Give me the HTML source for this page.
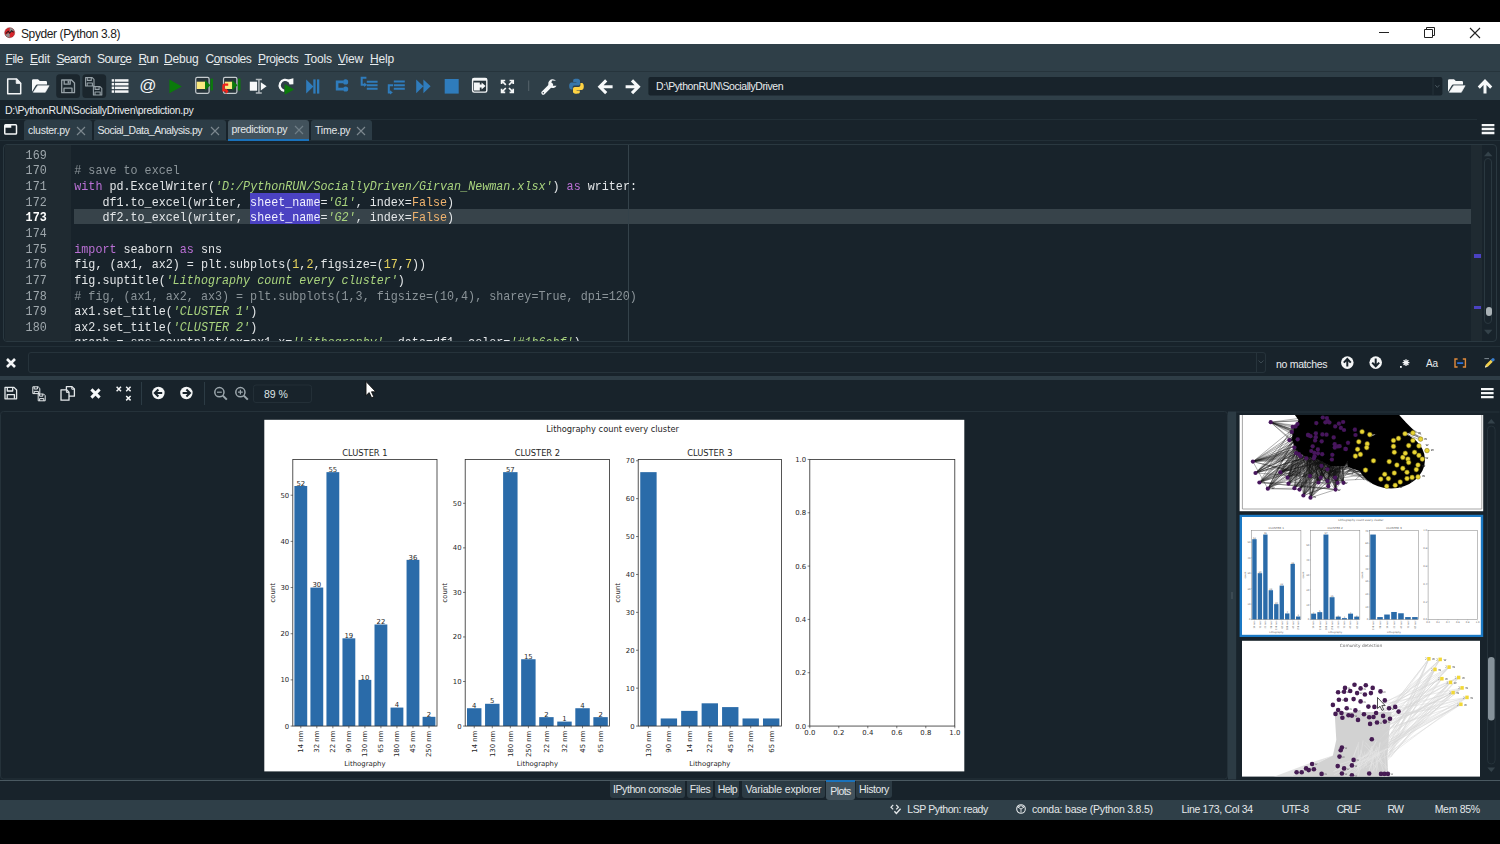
<!DOCTYPE html>
<html lang="en">
<head>
<meta charset="utf-8">
<title>Spyder (Python 3.8)</title>
<style>
*{box-sizing:border-box;margin:0;padding:0}
html,body{width:1500px;height:844px;overflow:hidden;background:#000}
body{position:relative;font-family:"Liberation Sans",sans-serif;font-size:11px;color:#e6e9eb}
.abs{position:absolute}
#titlebar{left:0;top:22px;width:1500px;height:22px;background:#fff;color:#1a1a1a}
#titlebar .ttl{position:absolute;left:21px;top:4.600px;font-size:12px;line-height:15px;letter-spacing:-.4px}
#menubar{left:0;top:44px;width:1500px;height:27px;background:#2f3f48}
#menubar span{position:absolute;top:7.700px;font-size:12px;line-height:15px;color:#e8ecee;white-space:nowrap}
#menubar u{text-decoration-thickness:1px;text-underline-offset:1px}
#toolbar{left:0;top:71px;width:1500px;height:29px;background:#2f3f48;overflow:hidden}
#pathrow{left:0;top:100px;width:1500px;height:19px;background:#18232b}
#pathrow span{position:absolute;left:5px;top:3px;font-size:10.500px;line-height:14px;color:#e8ecee;letter-spacing:-.3px;white-space:nowrap}
#tabrow{left:0;top:119px;width:1500px;height:22px;background:#18232b}
.tab{position:absolute;top:0;height:21px;background:#2c3c46;border-radius:3px 3px 0 0;font-size:10.5px;line-height:21px;color:#e4e8ea;white-space:nowrap;padding-left:4px;letter-spacing:-0.1px}
.tab.sel{background:#42525c;border-bottom:2px solid #1a72bb;line-height:19px}
.tab .x{position:absolute;right:5px;top:0;color:#8b979e;font-size:12px}
#editor{left:0;top:141px;width:1500px;height:204px;background:#18232b}
#findbar{left:0;top:345px;width:1500px;height:35px;background:#18232b}
#plotbar{left:0;top:380px;width:1500px;height:28px;background:#18232b}
#plots{left:0;top:408px;width:1500px;height:372px;background:#18232b}
#btabs{left:0;top:780px;width:1500px;height:20px;background:#18232b}
#status{left:0;top:799.700px;width:1500px;height:20.300px;background:#2f3f48}
</style>
</head>
<body>
<!-- ===== title bar ===== -->
<div id="titlebar" class="abs">
<svg class="abs" style="left:4.200px;top:5.200px" width="11.400" height="11.400" viewBox="0 0 14 14">
<circle cx="7" cy="7" r="6.2" fill="#d8262c"/>
<path d="M7 .8 A6.2 6.2 0 0 1 12.6 4.4 L7 7Z" fill="#8e8e8e"/>
<path d="M1.4 9.6 A6.2 6.2 0 0 0 7 13.2 L7 7Z" fill="#8e8e8e"/>
<path d="M2.2 8.2 L5.2 5.2 L7 7.6 L9.4 4.6 L11.8 6.6" fill="none" stroke="#2a1a1a" stroke-width="1.3"/>
<circle cx="7" cy="7" r="6.2" fill="none" stroke="#7a2226" stroke-width=".5"/>
</svg>
<span class="ttl">Spyder (Python 3.8)</span>
<svg class="abs" style="left:1370px;top:0" width="130" height="22" viewBox="0 0 130 22">
<path d="M9 10.5H19" stroke="#222" stroke-width="1"/>
<path d="M54.5 7.5H62.500V15.500H54.500Z M56.5 7.5V5.5H64.500V13.500H62.500" fill="none" stroke="#222" stroke-width="1"/>
<path d="M100 6L110 16M110 6L100 16" stroke="#222" stroke-width="1.1"/>
</svg>
</div>

<!-- ===== menu bar ===== -->
<div id="menubar" class="abs">
<span style="left:5.500px;letter-spacing:-.45px"><u>F</u>ile</span>
<span style="left:30px;letter-spacing:-.2px"><u>E</u>dit</span>
<span style="left:56.500px;letter-spacing:-.7px"><u>S</u>earch</span>
<span style="left:97px;letter-spacing:-.62px">Sour<u>c</u>e</span>
<span style="left:138.500px;letter-spacing:-.9px"><u>R</u>un</span>
<span style="left:164px;letter-spacing:-.2px"><u>D</u>ebug</span>
<span style="left:205.500px;letter-spacing:-.55px">C<u>o</u>nsoles</span>
<span style="left:258px;letter-spacing:-.38px"><u>P</u>rojects</span>
<span style="left:304.500px;letter-spacing:-.1px"><u>T</u>ools</span>
<span style="left:338px;letter-spacing:-.2px"><u>V</u>iew</span>
<span style="left:370px;letter-spacing:-.15px"><u>H</u>elp</span>
</div>
<!-- ===== main toolbar ===== -->
<div id="toolbar" class="abs">
<svg class="abs" style="left:0;top:0" width="1500" height="30" viewBox="0 71 1500 30">
<rect x="0" y="71" width="1500" height="1" fill="#26343c"/>
<!-- new file -->
<path d="M7.700 78.900H16.400L20.700 83.200V93.800H7.700Z" fill="none" stroke="#f4f6f7" stroke-width="1.500" stroke-linejoin="round"/>
<path d="M16.200 78.900V83.400H20.700Z" fill="#f4f6f7" stroke="#f4f6f7" stroke-width=".8" stroke-linejoin="round"/>
<!-- open folder -->
<path d="M32 80.600Q32 79.200 33.400 79.200H38L39.800 81H45.800Q47 81 47 82.200V84.600H37.200Q36.200 84.600 35.700 85.500L32 91.800Z" fill="#f7f9fa"/>
<path d="M37.600 85.700H49.100L45.300 92.300H33.300Z" fill="#f7f9fa" stroke="#f7f9fa" stroke-width=".6" stroke-linejoin="round"/>
<!-- save (disabled, pressed-look) -->
<rect x="56.200" y="74.200" width="23.800" height="23.800" rx="3.500" fill="#1b262d"/>
<g fill="none" stroke="#96a1a7" stroke-width="1.300" stroke-linejoin="round">
<path d="M61.700 80H71.500L74.500 83V92.700H61.700Z"/>
<path d="M64.200 80V84.200H70.200V80"/>
<path d="M64 92.700V88.200H72V92.700"/>
</g>
<rect x="67.600" y="80.600" width="1.600" height="3" fill="#96a1a7"/>
<!-- save all -->
<rect x="82.400" y="74.200" width="23.800" height="23.800" rx="3.500" fill="#1b262d"/>
<g fill="none" stroke="#96a1a7" stroke-width="1.100" stroke-linejoin="round">
<path d="M85.600 77.600H92.200L94 79.400V86H85.600Z"/>
<path d="M87.300 77.600V80.400H91.300V77.600"/>
<path d="M87.200 86V83H92.400V86"/>
<path d="M93.400 86.600H100L101.800 88.400V95H93.400Z" fill="#1b262d"/>
<path d="M95.100 86.600V89.400H99.100V86.600"/>
<path d="M95 95V92H100.200V95"/>
</g>
<!-- list -->
<g fill="#f4f6f7">
<rect x="111.700" y="79.200" width="16.800" height="2.500"/>
<rect x="111.700" y="82.900" width="16.800" height="2.500"/>
<rect x="111.700" y="86.600" width="16.800" height="2.500"/>
<rect x="111.700" y="90.300" width="16.800" height="2.500"/>
</g>
<rect x="114.200" y="79" width=".8" height="14" fill="#2f3f48"/>
<!-- run -->
<path d="M169.400 79.600L181.800 86.400L169.400 93.200Z" fill="#0b7a0b"/>
<!-- run cell -->
<rect x="195.700" y="77.400" width="13.400" height="15.900" rx="1.500" fill="#27343b" stroke="#c6cccf" stroke-width="1.200"/>
<rect x="196.700" y="81.700" width="8.500" height="7.300" fill="#fbe97e"/>
<path d="M205 80L210.300 85.200L205 90.400Z" fill="#0b7a0b"/>
<rect x="210.500" y="78.600" width="2.400" height="11.800" fill="#0b7a0b"/>
<!-- run cell and advance -->
<rect x="223.500" y="77.400" width="13.400" height="15.900" rx="1.500" fill="#27343b" stroke="#c6cccf" stroke-width="1.200"/>
<rect x="224.800" y="81.700" width="7.600" height="7.300" fill="#fbe97e"/>
<path d="M232.200 80L237.500 85.200L232.200 90.400Z" fill="#0b7a0b"/>
<rect x="238" y="78.600" width="2.500" height="11.800" fill="#0b7a0b"/>
<path d="M228.200 84.600H224.600Q223.400 84.600 223.400 85.800V90.400H226.800" fill="none" stroke="#f3221a" stroke-width="2.200"/>
<path d="M225.600 88.200L228.600 91.200L225.600 94.200Z" fill="#f3221a"/>
<!-- run selection -->
<rect x="249.800" y="81.700" width="7.300" height="9" fill="#f7f9fa"/>
<path d="M255.800 79.600H261.800M255.800 93H261.800M258.900 79.600V93" stroke="#b4bbbf" stroke-width="1.500" fill="none"/>
<path d="M260.800 82.200L266.600 86.300L260.800 90.400Z" fill="#f7f9fa"/>
<!-- re-run -->
<path d="M289 81.400A5.500 5.500 0 1 0 284.300 90.800" fill="none" stroke="#f7f9fa" stroke-width="2.300"/>
<path d="M287.400 79.800L293.400 78.200V84.200L289.600 84.400Z" fill="#f7f9fa"/>
<path d="M284.600 84L294.200 89.400L284.600 94.800Z" fill="#0b7a0b"/>
<!-- debug -->
<g fill="#2f7cbc">
<path d="M306.200 79.400L313.400 86.500L306.200 93.600Z"/>
<rect x="313.300" y="79.400" width="2.300" height="14.200"/>
<rect x="317" y="79.400" width="2.300" height="14.200"/>
</g>
<!-- step -->
<g fill="#2f7cbc" stroke="none">
<path d="M343 80.600H335.800V90.400H343V87.800H338.400V83.200H343Z"/>
<circle cx="345.600" cy="81.900" r="2.600"/>
<circle cx="345.600" cy="89" r="2.600"/>
</g>
<!-- step into -->
<g fill="none" stroke="#2f7cbc" stroke-width="2">
<path d="M366.400 77.700H361.700V84.800H365.200"/>
<path d="M366.800 81.700H377.600M366.800 85.200H377.600M366.800 88.700H377.600"/>
</g>
<path d="M364.200 82.600L367 84.800L364.200 87Z" fill="#2f7cbc"/>
<!-- step return -->
<g fill="none" stroke="#2f7cbc" stroke-width="2">
<path d="M393 85.300H388.800V92.400H391"/>
<path d="M393.800 81.600H404.800M393.800 85.200H404.800M393.800 88.800H404.800"/>
</g>
<path d="M390 90.200L392.800 92.400L390 94.600Z" fill="#2f7cbc"/>
<!-- continue -->
<path d="M416.200 79.400L423.400 86.300L416.200 93.200Z M423.400 79.400L430.600 86.300L423.400 93.200Z" fill="#2f7cbc"/>
<!-- stop -->
<rect x="444.700" y="79" width="14" height="14.600" fill="#2f7cbc"/>
<!-- maximize pane -->
<rect x="472.600" y="78.500" width="14.200" height="13.600" rx="1.500" fill="#27343b" stroke="#f4f6f7" stroke-width="1.400"/>
<rect x="472.600" y="78.500" width="14.200" height="2.200" fill="#f4f6f7"/>
<path d="M474 82.600H479.800V84.600H481.600V82.600L485.600 86.100L481.600 89.600V87.600H479.800V90.600H474Z" fill="#f4f6f7"/>
<!-- fullscreen -->
<g fill="none" stroke="#f4f6f7" stroke-width="1.700">
<path d="M501.600 84V80.500H505.200M502 81L505.800 84.800"/>
<path d="M513.200 84V80.500H509.600M512.800 81L509 84.800"/>
<path d="M501.600 88.800V92.300H505.200M502 91.800L505.800 88"/>
<path d="M513.200 88.800V92.300H509.600M512.800 91.800L509 88"/>
</g>
<!-- separator -->
<rect x="528.200" y="80.500" width="1" height="10.500" fill="#56646c"/>
<!-- wrench -->
<path d="M543.200 92.800L551.200 84.800" stroke="#f7f9fa" stroke-width="3.800" stroke-linecap="round" fill="none"/>
<path d="M555.600 80.400A4.400 4.400 0 1 0 556.800 85.200L553.200 85.600L551.200 83.600L551.600 80.600Z" fill="#f4f6f7" transform="rotate(8 552.500 83.500)"/>
<circle cx="543.300" cy="92.700" r=".7" fill="#2f3f48"/>
<!-- python -->
<path d="M576.200 78.800C573 78.800 573.200 80.200 573.200 80.200V82H576.400V82.600H571.600S569.200 82.400 569.200 86S571.200 89.400 571.200 89.400H572.600V87.600S572.500 85.600 574.600 85.600H578S580 85.600 580 83.700V80.800S580.300 78.800 576.200 78.800Z" fill="#3776ab"/>
<path d="M576.800 93.700C580 93.700 579.800 92.300 579.800 92.300V90.500H576.600V89.900H581.400S583.800 90.100 583.800 86.500S581.800 83.100 581.800 83.100H580.400V84.900S580.500 86.900 578.400 86.900H575S573 86.900 573 88.800V91.700S572.700 93.700 576.800 93.700Z" fill="#ffd343"/>
<!-- back / forward -->
<g fill="none" stroke="#f7f9fa" stroke-width="3.100" stroke-linejoin="miter">
<path d="M612.600 86.800H600.400M606.200 80.400L599.800 86.800L606.200 93.200"/>
<path d="M625.600 86.800H637.800M632 80.400L638.400 86.800L632 93.200"/>
</g>
<!-- path combo -->
<rect x="648.400" y="77" width="794" height="18.400" rx="2" fill="#18232b"/>
<rect x="1432.500" y="77.500" width="1" height="17.400" fill="#24323a"/>
<path d="M1435.300 85.200L1437.300 87.400L1439.300 85.200" fill="none" stroke="#4a5860" stroke-width="1"/>
<!-- folder (right) -->
<path d="M1448 80.600Q1448 79.200 1449.400 79.200H1454L1455.800 81H1461.800Q1463 81 1463 82.200V84.600H1453.200Q1452.200 84.600 1451.700 85.500L1448 91.800Z" fill="#f7f9fa"/>
<path d="M1453.600 85.700H1465.100L1461.300 92.300H1449.300Z" fill="#f7f9fa" stroke="#f7f9fa" stroke-width=".6" stroke-linejoin="round"/>
<!-- up arrow -->
<path d="M1485 93.400V81.800M1478.800 87.600L1485 81.200L1491.200 87.600" fill="none" stroke="#f7f9fa" stroke-width="3"/>
</svg>
<span class="abs" style="left:139.200px;top:5px;width:16px;text-align:center;font-size:17px;line-height:19px;color:#f4f6f7">@</span>
<span class="abs" style="left:656px;top:8px;font-size:10.500px;line-height:14px;color:#e8ecee;letter-spacing:-.41px;white-space:nowrap">D:\PythonRUN\SociallyDriven</span>
</div>

<!-- ===== file path row ===== -->
<div id="pathrow" class="abs"><span>D:\PythonRUN\SociallyDriven\prediction.py</span></div>
<!-- ===== editor tabs ===== -->
<style>
#editor .frame{position:absolute;left:3px;top:3px;width:1494px;height:198.400px;border:1px solid #2a3840;border-radius:4px;overflow:hidden}
#editor .gutter{position:absolute;left:1px;top:0;width:65.600px;height:200px;background:#1f2a31}
#code{position:absolute;left:0;top:.9px;width:1494px;height:198px;font-family:"Liberation Mono",monospace;font-size:11.720px;line-height:15.640px;color:#e3e6e8;white-space:pre}
#code .ln{position:absolute;left:0;width:1494px;height:15.640px;transform:scaleY(1.120);transform-origin:0 11.200px}
#code .n{position:absolute;left:21.600px;color:#9ea7ac}
#code .c{position:absolute;left:70.300px}
#code .k{color:#bb70d6}
#code .s{color:#a9d47e;font-style:italic}
#code .m{color:#8b9499}
#code .d{color:#e6d35e}
#code .b{color:#f0b36e}
#code .hl{color:#f2f2ff}
</style>
<div id="tabrow" class="abs">
<div class="abs" style="left:0;top:-.500px;width:1477px;height:1px;background:#222f37"></div>
<div class="abs" style="left:0;top:21.300px;width:1500px;height:1.800px;background:#222f37"></div>
<svg class="abs" style="left:4.400px;top:5.400px" width="14" height="11.200" viewBox="0 0 15 12"><rect x=".8" y=".8" width="12.600" height="10" rx="1" fill="none" stroke="#f4f6f7" stroke-width="1.600"/><rect x=".8" y=".8" width="7" height="3.200" fill="#f4f6f7"/></svg>
<div class="tab" style="left:24px;width:68px;top:1px;height:19.500px;line-height:20px"><span style="letter-spacing:-.26px">cluster.py</span><svg class="abs" style="left:52px;top:5.500px" width="10" height="10"><path d="M1 1L9 9M9 1L1 9" stroke="#7d8990" stroke-width="1.100"/></svg></div>
<div class="tab" style="left:93.500px;width:132px;top:1px;height:19.500px;line-height:20px"><span style="letter-spacing:-.48px">Social_Data_Analysis.py</span><svg class="abs" style="left:116px;top:5.500px" width="10" height="10"><path d="M1 1L9 9M9 1L1 9" stroke="#7d8990" stroke-width="1.100"/></svg></div>
<div class="tab sel" style="left:227.500px;width:81.500px;top:1px;height:21px"><span style="letter-spacing:-.3px">prediction.py</span><svg class="abs" style="left:66px;top:4.500px" width="10" height="10"><path d="M1 1L9 9M9 1L1 9" stroke="#6f7d85" stroke-width="1.200"/></svg></div>
<div class="tab" style="left:311px;width:61px;top:1px;height:19.500px;line-height:20px"><span style="letter-spacing:-.24px">Time.py</span><svg class="abs" style="left:45px;top:5.500px" width="10" height="10"><path d="M1 1L9 9M9 1L1 9" stroke="#7d8990" stroke-width="1.100"/></svg></div>
<svg class="abs" style="left:1481px;top:4.300px" width="14" height="12" viewBox="0 0 14 12"><path d="M.7 2.100H13.400M.7 6H13.400M.7 10H13.400" stroke="#f4f6f7" stroke-width="2.300"/></svg>
</div>

<!-- ===== code editor ===== -->
<div id="editor" class="abs">
<div class="frame"><div class="abs" style="left:0;top:-.700px;width:1494px;height:200px">
<div class="gutter"></div>
<div class="abs" style="left:70.300px;top:64.800px;width:1396.700px;height:15px;background:#37434a"></div>
<div class="abs" style="left:246.100px;top:48.600px;width:70.300px;height:15.600px;background:#4b42c2"></div>
<div class="abs" style="left:246.100px;top:64.240px;width:70.300px;height:15.600px;background:#4b42c2"></div>
<div class="abs" style="left:623.800px;top:0;width:1px;height:198px;background:#34424a"></div>
<div id="code">
<div class="ln" style="top:3.600px"><span class="n">169</span></div>
<div class="ln" style="top:19.240px"><span class="n">170</span><span class="c"><span class="m"># save to excel</span></span></div>
<div class="ln" style="top:34.880px"><span class="n">171</span><span class="c"><span class="k">with</span> pd.ExcelWriter(<span class="s">'D:/PythonRUN/SociallyDriven/Girvan_Newman.xlsx'</span>) <span class="k">as</span> writer:</span></div>
<div class="ln" style="top:50.520px"><span class="n">172</span><span class="c">    df1.to_excel(writer, <span class="hl">sheet_name</span>=<span class="s">'G1'</span>, index=<span class="b">False</span>)</span></div>
<div class="ln" style="top:66.160px"><span class="n" style="color:#fff;font-weight:bold">173</span><span class="c">    df2.to_excel(writer, <span class="hl">sheet_name</span>=<span class="s">'G2'</span>, index=<span class="b">False</span>)</span></div>
<div class="ln" style="top:81.800px"><span class="n">174</span></div>
<div class="ln" style="top:97.440px"><span class="n">175</span><span class="c"><span class="k">import</span> seaborn <span class="k">as</span> sns</span></div>
<div class="ln" style="top:113.080px"><span class="n">176</span><span class="c">fig, (ax1, ax2) = plt.subplots(<span class="d">1</span>,<span class="d">2</span>,figsize=(<span class="d">17</span>,<span class="d">7</span>))</span></div>
<div class="ln" style="top:128.720px"><span class="n">177</span><span class="c">fig.suptitle(<span class="s">'Lithography count every cluster'</span>)</span></div>
<div class="ln" style="top:144.360px"><span class="n">178</span><span class="c"><span class="m"># fig, (ax1, ax2, ax3) = plt.subplots(1,3, figsize=(10,4), sharey=True, dpi=120)</span></span></div>
<div class="ln" style="top:160px"><span class="n">179</span><span class="c">ax1.set_title(<span class="s">'CLUSTER 1'</span>)</span></div>
<div class="ln" style="top:175.640px"><span class="n">180</span><span class="c">ax2.set_title(<span class="s">'CLUSTER 2'</span>)</span></div>
<div class="ln" style="top:191.280px"><span class="c">graph = sns.countplot(ax=ax1,x=<span class="s">'Lithography'</span>, data=df1, color=<span class="s">'#1b6abf'</span>)</span></div>
</div>
<!-- scroll flag area + scrollbar -->
<div class="abs" style="left:1467px;top:0;width:10.800px;height:200px;background:#1f2a31"></div>
<div class="abs" style="left:1470px;top:110px;width:7px;height:4px;background:#4b42c2"></div>
<div class="abs" style="left:1470px;top:162px;width:7px;height:3px;background:#4b42c2"></div>
<div class="abs" style="left:1480px;top:14px;width:8px;height:166px;border:1px solid #2a3840;border-radius:4px"></div>
<div class="abs" style="left:1481.500px;top:163px;width:6px;height:9px;border-radius:3px;background:#aab2b6"></div>
<svg class="abs" style="left:1479px;top:3px" width="10" height="10"><path d="M1 9.200L5.200 4.600L9.400 9.200Z" fill="#34424a"/></svg>
<svg class="abs" style="left:1479px;top:183px" width="10" height="10"><path d="M1 2.800L5.200 7.400L9.400 2.800Z" fill="#34424a"/></svg>
</div>
</div>
</div>
<!-- ===== find bar ===== -->
<div id="findbar" class="abs">
<div class="abs" style="left:0;top:.5px;width:1500px;height:1px;background:#222f37"></div>
<svg class="abs" style="left:5px;top:11.700px" width="12" height="12" viewBox="0 0 12 12"><path d="M2 2L10 10M10 2L2 10" stroke="#f4f6f7" stroke-width="2.600"/></svg>
<div class="abs" style="left:28px;top:7.400px;width:1237.500px;height:20.600px;border:1px solid #26333b;border-radius:3px"></div>
<div class="abs" style="left:1255.500px;top:8px;width:1px;height:19px;background:#26333b"></div>
<svg class="abs" style="left:1257px;top:14px" width="8" height="6"><path d="M1.500 1.500L4 4L6.500 1.500" fill="none" stroke="#3b4951" stroke-width="1"/></svg>
<span class="abs" style="left:1276px;top:12px;font-size:10.500px;line-height:14px;letter-spacing:-.3px;color:#e8ecee;white-space:nowrap">no matches</span>
<svg class="abs" style="left:1336px;top:8px" width="164" height="22" viewBox="1336 353 164 22">
<!-- up / down circle arrows -->
<circle cx="1347.300" cy="362.600" r="6.300" fill="#f4f6f7"/>
<path d="M1347.300 366.600V359.400M1343.800 362.600L1347.300 359L1350.800 362.600" fill="none" stroke="#18232b" stroke-width="2"/>
<circle cx="1375.700" cy="362.600" r="6.300" fill="#f4f6f7"/>
<path d="M1375.700 358.600V365.800M1372.200 362.600L1375.700 366.200L1379.200 362.600" fill="none" stroke="#18232b" stroke-width="2"/>
<!-- regex -->
<rect x="1400" y="366" width="1.800" height="1.800" fill="#f4f6f7"/>
<g stroke="#f4f6f7" stroke-width="1.300"><path d="M1406 359.200V366M1402.600 362.600H1409.400M1403.600 360.200L1408.400 365M1408.400 360.200L1403.600 365"/></g>
<!-- highlighter pencil -->
<path d="M1485 367.600L1485.800 364.800L1490.800 359.800L1492.800 361.800L1487.800 366.800Z" fill="#f2d04c"/>
<path d="M1490.800 359.800L1492.400 358.200Q1493.200 357.600 1494 358.400L1494.400 358.800Q1495 359.600 1494.400 360.400L1492.800 361.800Z" fill="#3a7fd0"/>
<path d="M1485 367.600L1485.600 365.600L1487 367Z" fill="#e8ecee"/>
<path d="M1484.400 358.600H1489" stroke="#7f8b92" stroke-width="1"/>
<!-- brackets -->
<path d="M1457.600 359H1455V367H1457.600M1462.800 359H1465.400V367H1462.800" fill="none" stroke="#e08a3c" stroke-width="1.400"/>
<rect x="1457.200" y="362.200" width="6" height="1.800" fill="#2a6fd8"/>
</svg>
<span class="abs" style="left:1426px;top:12px;font-size:10px;line-height:14px;letter-spacing:-.2px;color:#e8ecee">Aa</span>
<div class="abs" style="left:0;top:31px;width:1500px;height:4px;background:#2e3d46"></div>
</div>

<!-- ===== plots toolbar ===== -->
<div id="plotbar" class="abs">
<svg class="abs" style="left:0;top:0" width="1500" height="28" viewBox="0 380 1500 28">
<g fill="none" stroke="#e4e8ea" stroke-width="1.300" stroke-linejoin="round">
<!-- save -->
<path d="M5 387.400H14L16.600 390V398.800H5Z"/><path d="M7.300 387.400V391H12.700V387.400"/><path d="M7.200 398.800V394.600H14.400V398.800"/>
<!-- copy -->
<path d="M66.400 386.600H72L74.400 389V396.200H66.400Z"/>
</g>
<path d="M61 389.800H66.600L69 392.200V400.200H61Z" fill="#18232b" stroke="#e4e8ea" stroke-width="1.300" stroke-linejoin="round"/>
<path d="M66.400 389.800V392.400H69" fill="none" stroke="#e4e8ea" stroke-width="1"/>
<path d="M71.800 386.600V389.200H74.400" fill="none" stroke="#e4e8ea" stroke-width="1"/>
<!-- save all -->
<g fill="none" stroke="#e4e8ea" stroke-width="1" stroke-linejoin="round">
<path d="M32.800 386.800H38.200L39.800 388.400V393.600H32.800Z"/><path d="M34.200 386.800V389H37.400V386.800"/><path d="M34.200 393.600V391.400H38.400V393.600"/>
<path d="M38.200 394H43.600L45.200 395.600V400.800H38.200Z" fill="#18232b"/><path d="M39.600 394V396.200H42.800V394"/><path d="M39.600 400.800V398.600H43.800V400.800"/>
</g>
<!-- close -->
<path d="M91.400 389.400L99.600 397.600M99.600 389.400L91.400 397.600" stroke="#f7f9fa" stroke-width="3"/>
<!-- close all -->
<g stroke="#f4f6f7" stroke-width="1.500"><path d="M116.600 386.800L121 391.200M121 386.800L116.600 391.200"/><path d="M126.200 386.800L130.600 391.200M130.600 386.800L126.200 391.200"/><path d="M126.200 396L130.600 400.400M130.600 396L126.200 400.400"/></g>
<rect x="141" y="382" width="1" height="23" fill="#2c3b44"/>
<!-- prev / next -->
<circle cx="158.400" cy="393" r="6.200" fill="#f4f6f7"/>
<path d="M162.200 393H155.200M158.400 389.500L154.800 393L158.400 396.500" fill="none" stroke="#18232b" stroke-width="2"/>
<circle cx="186.400" cy="393" r="6.200" fill="#f4f6f7"/>
<path d="M182.600 393H189.600M186.400 389.500L190 393L186.400 396.500" fill="none" stroke="#18232b" stroke-width="2"/>
<rect x="204" y="382" width="1" height="23" fill="#2c3b44"/>
<!-- zoom out / in -->
<g fill="none" stroke="#9ca7ad" stroke-width="1.500">
<circle cx="219.400" cy="392.200" r="4.600"/><path d="M222.800 395.600L226.800 399.600" stroke-width="2"/><path d="M217 392.200H221.800" stroke-width="1.200"/>
<circle cx="240.400" cy="392.200" r="4.600"/><path d="M243.800 395.600L247.800 399.600" stroke-width="2"/><path d="M238 392.200H242.800M240.400 389.800V394.600" stroke-width="1.200"/>
</g>
<rect x="253.500" y="385" width="58" height="17.500" rx="2.500" fill="none" stroke="#232f37" stroke-width="1"/>
<!-- hamburger -->
<path d="M1481 389.200H1493.600M1481 393.200H1493.600M1481 397.200H1493.600" stroke="#f4f6f7" stroke-width="2.200"/>
<!-- mouse cursor -->
<path d="M366 381.500V395.600L369.200 392.600L371.600 397.800L373.800 396.800L371.500 391.800H375.800Z" fill="#fff" stroke="#111" stroke-width=".9" stroke-linejoin="round"/>
</svg>
<span class="abs" style="left:264px;top:6.500px;font-size:10.500px;line-height:14px;color:#dfe3e6;letter-spacing:-.05px">89 %</span>
</div>
<!-- ===== plots pane ===== -->
<div id="plots" class="abs">
<svg class="abs" style="left:0;top:0" width="1500" height="372" viewBox="0 408 1500 372" font-family="'DejaVu Sans','Liberation Sans',sans-serif">
<rect x=".5" y="411.500" width="1227" height="367.500" rx="3" fill="none" stroke="#25323a" stroke-width="1"/>
<rect x="1228" y="411.500" width="8.200" height="368" fill="#2c3b44"/>
<rect x="1231.600" y="592" width=".8" height="7" fill="#55636b"/>
<rect x="1236.200" y="411.500" width="263.300" height="1" fill="#25323a"/>
<rect x="264.3" y="419.8" width="700" height="351.6" fill="#fff"/>
<text x="612.6" y="432.21" font-size="8.3" text-anchor="middle" fill="#262626">Lithography count every cluster</text>
<rect x="294.4" y="485.99" width="12.82" height="240.06" fill="#2a6ba9"/>
<text x="300.81" y="485.69" font-size="6.9" text-anchor="middle" fill="#262626">52</text>
<path d="M300.81 726.05v2.2" stroke="#222" stroke-width=".6"/>
<text transform="translate(303.31 730.65) rotate(-90)" font-size="6.9" text-anchor="end" fill="#262626">14 nm</text>
<rect x="310.42" y="587.55" width="12.82" height="138.5" fill="#2a6ba9"/>
<text x="316.83" y="587.25" font-size="6.9" text-anchor="middle" fill="#262626">30</text>
<path d="M316.83 726.05v2.2" stroke="#222" stroke-width=".6"/>
<text transform="translate(319.33 730.65) rotate(-90)" font-size="6.9" text-anchor="end" fill="#262626">32 nm</text>
<rect x="326.45" y="472.14" width="12.82" height="253.91" fill="#2a6ba9"/>
<text x="332.86" y="471.84" font-size="6.9" text-anchor="middle" fill="#262626">55</text>
<path d="M332.86 726.05v2.2" stroke="#222" stroke-width=".6"/>
<text transform="translate(335.36 730.65) rotate(-90)" font-size="6.9" text-anchor="end" fill="#262626">22 nm</text>
<rect x="342.47" y="638.33" width="12.82" height="87.71" fill="#2a6ba9"/>
<text x="348.88" y="638.03" font-size="6.9" text-anchor="middle" fill="#262626">19</text>
<path d="M348.88 726.05v2.2" stroke="#222" stroke-width=".6"/>
<text transform="translate(351.38 730.65) rotate(-90)" font-size="6.9" text-anchor="end" fill="#262626">90 nm</text>
<rect x="358.49" y="679.88" width="12.82" height="46.17" fill="#2a6ba9"/>
<text x="364.9" y="679.58" font-size="6.9" text-anchor="middle" fill="#262626">10</text>
<path d="M364.9 726.05v2.2" stroke="#222" stroke-width=".6"/>
<text transform="translate(367.4 730.65) rotate(-90)" font-size="6.9" text-anchor="end" fill="#262626">130 nm</text>
<rect x="374.51" y="624.49" width="12.82" height="101.56" fill="#2a6ba9"/>
<text x="380.92" y="624.19" font-size="6.9" text-anchor="middle" fill="#262626">22</text>
<path d="M380.92 726.05v2.2" stroke="#222" stroke-width=".6"/>
<text transform="translate(383.42 730.65) rotate(-90)" font-size="6.9" text-anchor="end" fill="#262626">65 nm</text>
<rect x="390.54" y="707.58" width="12.82" height="18.47" fill="#2a6ba9"/>
<text x="396.94" y="707.28" font-size="6.9" text-anchor="middle" fill="#262626">4</text>
<path d="M396.94 726.05v2.2" stroke="#222" stroke-width=".6"/>
<text transform="translate(399.44 730.65) rotate(-90)" font-size="6.9" text-anchor="end" fill="#262626">180 nm</text>
<rect x="406.56" y="559.85" width="12.82" height="166.19" fill="#2a6ba9"/>
<text x="412.97" y="559.55" font-size="6.9" text-anchor="middle" fill="#262626">36</text>
<path d="M412.97 726.05v2.2" stroke="#222" stroke-width=".6"/>
<text transform="translate(415.47 730.65) rotate(-90)" font-size="6.9" text-anchor="end" fill="#262626">45 nm</text>
<rect x="422.58" y="716.82" width="12.82" height="9.23" fill="#2a6ba9"/>
<text x="428.99" y="716.52" font-size="6.9" text-anchor="middle" fill="#262626">2</text>
<path d="M428.99 726.05v2.2" stroke="#222" stroke-width=".6"/>
<text transform="translate(431.49 730.65) rotate(-90)" font-size="6.9" text-anchor="end" fill="#262626">250 nm</text>
<rect x="292.8" y="459.45" width="144.2" height="266.6" fill="none" stroke="#2b2b2b" stroke-width=".8"/>
<path d="M292.8 726.05h-2.2" stroke="#222" stroke-width=".6"/>
<text x="289.2" y="728.55" font-size="6.9" text-anchor="end" fill="#262626">0</text>
<path d="M292.8 679.88h-2.2" stroke="#222" stroke-width=".6"/>
<text x="289.2" y="682.38" font-size="6.9" text-anchor="end" fill="#262626">10</text>
<path d="M292.8 633.72h-2.2" stroke="#222" stroke-width=".6"/>
<text x="289.2" y="636.22" font-size="6.9" text-anchor="end" fill="#262626">20</text>
<path d="M292.8 587.55h-2.2" stroke="#222" stroke-width=".6"/>
<text x="289.2" y="590.05" font-size="6.9" text-anchor="end" fill="#262626">30</text>
<path d="M292.8 541.39h-2.2" stroke="#222" stroke-width=".6"/>
<text x="289.2" y="543.89" font-size="6.9" text-anchor="end" fill="#262626">40</text>
<path d="M292.8 495.22h-2.2" stroke="#222" stroke-width=".6"/>
<text x="289.2" y="497.72" font-size="6.9" text-anchor="end" fill="#262626">50</text>
<text x="364.9" y="456.24" font-size="8.3" text-anchor="middle" fill="#262626">CLUSTER 1</text>
<text x="364.9" y="765.79" font-size="6.9" text-anchor="middle" fill="#262626">Lithography</text>
<text transform="translate(274.6 592.75) rotate(-90)" font-size="6.9" text-anchor="middle" fill="#262626">count</text>
<rect x="467" y="708.23" width="14.44" height="17.82" fill="#2a6ba9"/>
<text x="474.23" y="707.93" font-size="6.9" text-anchor="middle" fill="#262626">4</text>
<path d="M474.23 726.05v2.2" stroke="#222" stroke-width=".6"/>
<text transform="translate(476.73 730.65) rotate(-90)" font-size="6.9" text-anchor="end" fill="#262626">14 nm</text>
<rect x="485.06" y="703.78" width="14.44" height="22.27" fill="#2a6ba9"/>
<text x="492.28" y="703.48" font-size="6.9" text-anchor="middle" fill="#262626">5</text>
<path d="M492.28 726.05v2.2" stroke="#222" stroke-width=".6"/>
<text transform="translate(494.78 730.65) rotate(-90)" font-size="6.9" text-anchor="end" fill="#262626">130 nm</text>
<rect x="503.11" y="472.14" width="14.44" height="253.91" fill="#2a6ba9"/>
<text x="510.33" y="471.84" font-size="6.9" text-anchor="middle" fill="#262626">57</text>
<path d="M510.33 726.05v2.2" stroke="#222" stroke-width=".6"/>
<text transform="translate(512.83 730.65) rotate(-90)" font-size="6.9" text-anchor="end" fill="#262626">180 nm</text>
<rect x="521.15" y="659.23" width="14.44" height="66.82" fill="#2a6ba9"/>
<text x="528.38" y="658.93" font-size="6.9" text-anchor="middle" fill="#262626">15</text>
<path d="M528.38 726.05v2.2" stroke="#222" stroke-width=".6"/>
<text transform="translate(530.88 730.65) rotate(-90)" font-size="6.9" text-anchor="end" fill="#262626">250 nm</text>
<rect x="539.21" y="717.14" width="14.44" height="8.91" fill="#2a6ba9"/>
<text x="546.43" y="716.84" font-size="6.9" text-anchor="middle" fill="#262626">2</text>
<path d="M546.43 726.05v2.2" stroke="#222" stroke-width=".6"/>
<text transform="translate(548.93 730.65) rotate(-90)" font-size="6.9" text-anchor="end" fill="#262626">22 nm</text>
<rect x="557.25" y="721.59" width="14.44" height="4.45" fill="#2a6ba9"/>
<text x="564.48" y="721.29" font-size="6.9" text-anchor="middle" fill="#262626">1</text>
<path d="M564.48 726.05v2.2" stroke="#222" stroke-width=".6"/>
<text transform="translate(566.98 730.65) rotate(-90)" font-size="6.9" text-anchor="end" fill="#262626">32 nm</text>
<rect x="575.31" y="708.23" width="14.44" height="17.82" fill="#2a6ba9"/>
<text x="582.53" y="707.93" font-size="6.9" text-anchor="middle" fill="#262626">4</text>
<path d="M582.53 726.05v2.2" stroke="#222" stroke-width=".6"/>
<text transform="translate(585.03 730.65) rotate(-90)" font-size="6.9" text-anchor="end" fill="#262626">45 nm</text>
<rect x="593.36" y="717.14" width="14.44" height="8.91" fill="#2a6ba9"/>
<text x="600.58" y="716.84" font-size="6.9" text-anchor="middle" fill="#262626">2</text>
<path d="M600.58 726.05v2.2" stroke="#222" stroke-width=".6"/>
<text transform="translate(603.08 730.65) rotate(-90)" font-size="6.9" text-anchor="end" fill="#262626">65 nm</text>
<rect x="465.2" y="459.45" width="144.4" height="266.6" fill="none" stroke="#2b2b2b" stroke-width=".8"/>
<path d="M465.2 726.05h-2.2" stroke="#222" stroke-width=".6"/>
<text x="461.6" y="728.55" font-size="6.9" text-anchor="end" fill="#262626">0</text>
<path d="M465.2 681.5h-2.2" stroke="#222" stroke-width=".6"/>
<text x="461.6" y="684" font-size="6.9" text-anchor="end" fill="#262626">10</text>
<path d="M465.2 636.96h-2.2" stroke="#222" stroke-width=".6"/>
<text x="461.6" y="639.46" font-size="6.9" text-anchor="end" fill="#262626">20</text>
<path d="M465.2 592.41h-2.2" stroke="#222" stroke-width=".6"/>
<text x="461.6" y="594.91" font-size="6.9" text-anchor="end" fill="#262626">30</text>
<path d="M465.2 547.87h-2.2" stroke="#222" stroke-width=".6"/>
<text x="461.6" y="550.37" font-size="6.9" text-anchor="end" fill="#262626">40</text>
<path d="M465.2 503.32h-2.2" stroke="#222" stroke-width=".6"/>
<text x="461.6" y="505.82" font-size="6.9" text-anchor="end" fill="#262626">50</text>
<text x="537.4" y="456.24" font-size="8.3" text-anchor="middle" fill="#262626">CLUSTER 2</text>
<text x="537.4" y="765.79" font-size="6.9" text-anchor="middle" fill="#262626">Lithography</text>
<text transform="translate(447 592.75) rotate(-90)" font-size="6.9" text-anchor="middle" fill="#262626">count</text>
<rect x="640.25" y="472.14" width="16.37" height="253.91" fill="#2a6ba9"/>
<path d="M648.43 726.05v2.2" stroke="#222" stroke-width=".6"/>
<text transform="translate(650.93 730.65) rotate(-90)" font-size="6.9" text-anchor="end" fill="#262626">130 nm</text>
<rect x="660.7" y="718.47" width="16.37" height="7.58" fill="#2a6ba9"/>
<path d="M668.89 726.05v2.2" stroke="#222" stroke-width=".6"/>
<text transform="translate(671.39 730.65) rotate(-90)" font-size="6.9" text-anchor="end" fill="#262626">90 nm</text>
<rect x="681.16" y="710.89" width="16.37" height="15.16" fill="#2a6ba9"/>
<path d="M689.34 726.05v2.2" stroke="#222" stroke-width=".6"/>
<text transform="translate(691.84 730.65) rotate(-90)" font-size="6.9" text-anchor="end" fill="#262626">14 nm</text>
<rect x="701.62" y="703.31" width="16.37" height="22.74" fill="#2a6ba9"/>
<path d="M709.8 726.05v2.2" stroke="#222" stroke-width=".6"/>
<text transform="translate(712.3 730.65) rotate(-90)" font-size="6.9" text-anchor="end" fill="#262626">22 nm</text>
<rect x="722.07" y="707.1" width="16.37" height="18.95" fill="#2a6ba9"/>
<path d="M730.26 726.05v2.2" stroke="#222" stroke-width=".6"/>
<text transform="translate(732.76 730.65) rotate(-90)" font-size="6.9" text-anchor="end" fill="#262626">45 nm</text>
<rect x="742.53" y="718.47" width="16.37" height="7.58" fill="#2a6ba9"/>
<path d="M750.71 726.05v2.2" stroke="#222" stroke-width=".6"/>
<text transform="translate(753.21 730.65) rotate(-90)" font-size="6.9" text-anchor="end" fill="#262626">32 nm</text>
<rect x="762.99" y="718.47" width="16.37" height="7.58" fill="#2a6ba9"/>
<path d="M771.17 726.05v2.2" stroke="#222" stroke-width=".6"/>
<text transform="translate(773.67 730.65) rotate(-90)" font-size="6.9" text-anchor="end" fill="#262626">65 nm</text>
<rect x="638.2" y="459.45" width="143.2" height="266.6" fill="none" stroke="#2b2b2b" stroke-width=".8"/>
<path d="M638.2 726.05h-2.2" stroke="#222" stroke-width=".6"/>
<text x="634.6" y="728.55" font-size="6.9" text-anchor="end" fill="#262626">0</text>
<path d="M638.2 688.15h-2.2" stroke="#222" stroke-width=".6"/>
<text x="634.6" y="690.65" font-size="6.9" text-anchor="end" fill="#262626">10</text>
<path d="M638.2 650.26h-2.2" stroke="#222" stroke-width=".6"/>
<text x="634.6" y="652.76" font-size="6.9" text-anchor="end" fill="#262626">20</text>
<path d="M638.2 612.36h-2.2" stroke="#222" stroke-width=".6"/>
<text x="634.6" y="614.86" font-size="6.9" text-anchor="end" fill="#262626">30</text>
<path d="M638.2 574.46h-2.2" stroke="#222" stroke-width=".6"/>
<text x="634.6" y="576.96" font-size="6.9" text-anchor="end" fill="#262626">40</text>
<path d="M638.2 536.56h-2.2" stroke="#222" stroke-width=".6"/>
<text x="634.6" y="539.06" font-size="6.9" text-anchor="end" fill="#262626">50</text>
<path d="M638.2 498.67h-2.2" stroke="#222" stroke-width=".6"/>
<text x="634.6" y="501.17" font-size="6.9" text-anchor="end" fill="#262626">60</text>
<path d="M638.2 460.77h-2.2" stroke="#222" stroke-width=".6"/>
<text x="634.6" y="463.27" font-size="6.9" text-anchor="end" fill="#262626">70</text>
<text x="709.8" y="456.24" font-size="8.3" text-anchor="middle" fill="#262626">CLUSTER 3</text>
<text x="709.8" y="765.79" font-size="6.9" text-anchor="middle" fill="#262626">Lithography</text>
<text transform="translate(620 592.75) rotate(-90)" font-size="6.9" text-anchor="middle" fill="#262626">count</text>
<rect x="809.8" y="459.45" width="145" height="266.6" fill="none" stroke="#2b2b2b" stroke-width=".8"/>
<path d="M809.8 726.05h-2.2" stroke="#222" stroke-width=".6"/>
<text x="806.2" y="728.55" font-size="6.9" text-anchor="end" fill="#262626">0.0</text>
<path d="M809.8 672.73h-2.2" stroke="#222" stroke-width=".6"/>
<text x="806.2" y="675.23" font-size="6.9" text-anchor="end" fill="#262626">0.2</text>
<path d="M809.8 619.41h-2.2" stroke="#222" stroke-width=".6"/>
<text x="806.2" y="621.91" font-size="6.9" text-anchor="end" fill="#262626">0.4</text>
<path d="M809.8 566.09h-2.2" stroke="#222" stroke-width=".6"/>
<text x="806.2" y="568.59" font-size="6.9" text-anchor="end" fill="#262626">0.6</text>
<path d="M809.8 512.77h-2.2" stroke="#222" stroke-width=".6"/>
<text x="806.2" y="515.27" font-size="6.9" text-anchor="end" fill="#262626">0.8</text>
<path d="M809.8 459.45h-2.2" stroke="#222" stroke-width=".6"/>
<text x="806.2" y="461.95" font-size="6.9" text-anchor="end" fill="#262626">1.0</text>
<path d="M809.8 726.05v2.2" stroke="#222" stroke-width=".6"/>
<text x="809.8" y="735.45" font-size="6.9" text-anchor="middle" fill="#262626">0.0</text>
<path d="M838.8 726.05v2.2" stroke="#222" stroke-width=".6"/>
<text x="838.8" y="735.45" font-size="6.9" text-anchor="middle" fill="#262626">0.2</text>
<path d="M867.8 726.05v2.2" stroke="#222" stroke-width=".6"/>
<text x="867.8" y="735.45" font-size="6.9" text-anchor="middle" fill="#262626">0.4</text>
<path d="M896.8 726.05v2.2" stroke="#222" stroke-width=".6"/>
<text x="896.8" y="735.45" font-size="6.9" text-anchor="middle" fill="#262626">0.6</text>
<path d="M925.8 726.05v2.2" stroke="#222" stroke-width=".6"/>
<text x="925.8" y="735.45" font-size="6.9" text-anchor="middle" fill="#262626">0.8</text>
<path d="M954.8 726.05v2.2" stroke="#222" stroke-width=".6"/>
<text x="954.8" y="735.45" font-size="6.9" text-anchor="middle" fill="#262626">1.0</text>
<rect x="1239.600" y="415" width="243.600" height="96.200" fill="#fff"/>
<path d="M1242.400 415V509H1481.800V415" fill="none" stroke="#8f8f8f" stroke-width=".8"/>
<clipPath id="t1c"><rect x="1239.600" y="415" width="243.600" height="96.200"/></clipPath>
<filter id="bl1" x="-5%" y="-5%" width="110%" height="110%"><feGaussianBlur stdDeviation=".45"/></filter>
<g clip-path="url(#t1c)"><g filter="url(#bl1)">
<path d="M1270.7 422.2L1324.5 440.5M1270.7 422.2L1353.3 436.5M1270.7 422.2L1327.9 441.6M1270.7 422.2L1308.2 438.4M1270.7 422.2L1335.3 450.3M1270.7 422.2L1302.7 429.6M1270.7 422.2L1302.5 451M1270.7 422.2L1339.2 418.5M1270.7 422.2L1356.8 457.6M1270.7 422.2L1336.8 442.8M1270.7 422.2L1306.6 417.4M1270.7 422.2L1329.2 419.3M1270.7 422.2L1308.5 427M1270.7 422.2L1298.8 436.4M1270.7 422.2L1323.8 452.4M1270.7 422.2L1328.6 443.9M1252.9 461.6L1327.4 444.8M1252.9 461.6L1324.8 428.5M1252.9 461.6L1357.8 458.9M1252.9 461.6L1348.2 446.7M1252.9 461.6L1316.2 426.5M1252.9 461.6L1314.6 419.7M1252.9 461.6L1343.7 433.7M1252.9 461.6L1348.6 433.1M1252.9 461.6L1355.4 452.6M1252.9 461.6L1297 425.7M1252.9 461.6L1352.4 436.7M1252.9 461.6L1356.7 433.6M1252.9 461.6L1301.4 443.4M1252.9 461.6L1344.4 428.2M1252.9 461.6L1302.3 430.9M1252.9 461.6L1355.7 448.9M1255.5 473L1304.1 427.2M1255.5 473L1303.1 419.3M1255.5 473L1345.5 424.3M1255.5 473L1331 435.7M1255.5 473L1308.6 447.8M1255.5 473L1304.9 444M1255.5 473L1304.1 434.6M1255.5 473L1309.9 428.2M1255.5 473L1356.1 450.8M1255.5 473L1315.5 454.2M1255.5 473L1309.8 433.5M1255.5 473L1349 443.9M1255.5 473L1303.1 458.6M1255.5 473L1310 427.7M1255.5 473L1344.1 430.7M1255.5 473L1315 419.9M1259.4 482.5L1302.4 441.4M1259.4 482.5L1311.8 442.2M1259.4 482.5L1319.6 436M1259.4 482.5L1355.4 437.2M1259.4 482.5L1332 453.5M1259.4 482.5L1308.1 423.3M1259.4 482.5L1352.3 451.4M1259.4 482.5L1312.2 424.8M1259.4 482.5L1342 456.6M1259.4 482.5L1308.9 457M1259.4 482.5L1350.7 442.3M1259.4 482.5L1322.6 421.2M1259.4 482.5L1299.3 457.5M1259.4 482.5L1311.5 446.6M1259.4 482.5L1312.6 451.6M1259.4 482.5L1333.3 429.2M1267.8 488.7L1307.6 447.3M1267.8 488.7L1301.1 426.4M1267.8 488.7L1331.1 452.9M1267.8 488.7L1334.4 428.6M1267.8 488.7L1352.9 425.4M1267.8 488.7L1298 428.2M1267.8 488.7L1324.1 419.3M1267.8 488.7L1307.7 432.4M1267.8 488.7L1331.8 422.3M1267.8 488.7L1319 454.5M1267.8 488.7L1356.7 444.6M1267.8 488.7L1339.1 441.5M1267.8 488.7L1305.5 418.3M1267.8 488.7L1298 455.3M1267.8 488.7L1339.7 457.5M1267.8 488.7L1298.3 443.7M1280.4 472.3L1326.3 447.7M1280.4 472.3L1316.4 459.1M1280.4 472.3L1301.5 439.9M1280.4 472.3L1341.9 454.9M1280.4 472.3L1341.9 446.6M1280.4 472.3L1345.3 455.5M1280.4 472.3L1318.4 445.8M1280.4 472.3L1351.9 453.6M1280.4 472.3L1322.4 450.2M1280.4 472.3L1349.6 441M1280.4 472.3L1335 433M1280.4 472.3L1332.5 442.5M1280.4 472.3L1301.8 443.8M1280.4 472.3L1357.5 454M1280.4 472.3L1341.3 433.2M1280.4 472.3L1341.8 441.4M1287.6 477.7L1323.8 452.3M1287.6 477.7L1302.1 448.5M1287.6 477.7L1298.8 442.2M1287.6 477.7L1326.3 426.5M1287.6 477.7L1339.5 437.8M1287.6 477.7L1334.4 455.7M1287.6 477.7L1312.5 417.3M1287.6 477.7L1315.3 445.5M1287.6 477.7L1309.3 424M1287.6 477.7L1352.2 444.7M1287.6 477.7L1323.9 454.5M1287.6 477.7L1316.9 445M1287.6 477.7L1309.1 435M1287.6 477.7L1346.1 455.5M1287.6 477.7L1350.6 433M1287.6 477.7L1332.5 430.2M1288.5 483.7L1305.3 437.8M1288.5 483.7L1348 452.7M1288.5 483.7L1340.3 457M1288.5 483.7L1313.8 423.9M1288.5 483.7L1324.4 428.4M1288.5 483.7L1310 434.3M1288.5 483.7L1335.1 437.7M1288.5 483.7L1316.2 452.3M1288.5 483.7L1356.8 435.9M1288.5 483.7L1301.5 418.1M1288.5 483.7L1350.2 418.5M1288.5 483.7L1340.1 440.9M1288.5 483.7L1315.8 450.3M1288.5 483.7L1298.1 422.5M1288.5 483.7L1324.7 417.8M1288.5 483.7L1347.5 426.8M1294.4 488.2L1305.5 418.8M1294.4 488.2L1335.3 435.7M1294.4 488.2L1335.4 444.5M1294.4 488.2L1346.2 457.3M1294.4 488.2L1338.7 425.2M1294.4 488.2L1325.9 424.3M1294.4 488.2L1297.6 436.8M1294.4 488.2L1340.5 424.4M1294.4 488.2L1313.6 431.4M1294.4 488.2L1339.5 438.8M1294.4 488.2L1334.4 448.8M1294.4 488.2L1320.9 450.3M1294.4 488.2L1352.2 420.5M1294.4 488.2L1353.8 447.4M1294.4 488.2L1304.9 436M1294.4 488.2L1335.1 455.3M1299.5 489.6L1319.9 440.9M1299.5 489.6L1350.6 450.5M1299.5 489.6L1354.5 436.4M1299.5 489.6L1336.7 425.4M1299.5 489.6L1341 451.4M1299.5 489.6L1336.1 447.2M1299.5 489.6L1310 454.9M1299.5 489.6L1356.7 458.1M1299.5 489.6L1329.7 450.2M1299.5 489.6L1316.5 455.3M1299.5 489.6L1349.1 431.5M1299.5 489.6L1302 435.4M1299.5 489.6L1330.5 449.3M1299.5 489.6L1326.7 418M1299.5 489.6L1346.3 419.5M1299.5 489.6L1345.7 424.1M1303.4 495.5L1317.4 450.1M1303.4 495.5L1305.5 423.1M1303.4 495.5L1328.4 447.4M1303.4 495.5L1348.2 446M1303.4 495.5L1354.6 437.6M1303.4 495.5L1354.8 420.4M1303.4 495.5L1310.5 439.1M1303.4 495.5L1314.6 447.6M1303.4 495.5L1335.9 438.9M1303.4 495.5L1348.4 440.5M1303.4 495.5L1316 432.9M1303.4 495.5L1348.5 454.9M1303.4 495.5L1309.6 452.8M1303.4 495.5L1356 439M1303.4 495.5L1331.9 425.3M1303.4 495.5L1329.6 438.1M1310.5 497.7L1333.8 417.9M1310.5 497.7L1356 438.6M1310.5 497.7L1321.4 450.7M1310.5 497.7L1331.3 437.6M1310.5 497.7L1339.1 419.6M1310.5 497.7L1329.8 434.3M1310.5 497.7L1355.3 455.9M1310.5 497.7L1313.4 436.8M1310.5 497.7L1304.7 435.1M1310.5 497.7L1346.7 454.9M1310.5 497.7L1326 430.2M1310.5 497.7L1308.6 442.9M1310.5 497.7L1353.4 422.3M1310.5 497.7L1344.5 417.7M1310.5 497.7L1308.8 426.4M1310.5 497.7L1338.8 430.4M1310 476L1318.6 443M1310 476L1303.3 447.7M1310 476L1304.4 438.4M1310 476L1312.2 425.1M1310 476L1329.3 435.3M1310 476L1319.9 434.3M1310 476L1329.2 423.5M1310 476L1309.4 443.5M1310 476L1335.9 439.2M1310 476L1348.8 442.7M1310 476L1349.2 426.6M1310 476L1342.1 451.1M1310 476L1352 430.1M1310 476L1316.2 455.8M1310 476L1310.3 459M1310 476L1351.1 422.4M1318.5 482.5L1311.5 447.5M1318.5 482.5L1312.8 420.9M1318.5 482.5L1347.7 434.6M1318.5 482.5L1345.1 422.1M1318.5 482.5L1321.5 445.8M1318.5 482.5L1298 425.3M1318.5 482.5L1338.5 455.4M1318.5 482.5L1356 421.7M1318.5 482.5L1327.8 448.9M1318.5 482.5L1327.6 445.8M1318.5 482.5L1308.5 419.8M1318.5 482.5L1303.4 418.4M1318.5 482.5L1330.6 438.6M1318.5 482.5L1331.6 423M1318.5 482.5L1308.2 425.4M1318.5 482.5L1348.2 458.7M1320.7 477.7L1353.5 420.8M1320.7 477.7L1300.7 457M1320.7 477.7L1325.1 449.1M1320.7 477.7L1316.9 436.5M1320.7 477.7L1328.4 435M1320.7 477.7L1333.6 417.3M1320.7 477.7L1339.7 452.5M1320.7 477.7L1308 436M1320.7 477.7L1342 433.9M1320.7 477.7L1308.8 423.8M1320.7 477.7L1328.2 417.4M1320.7 477.7L1351.4 450.7M1320.7 477.7L1339.9 453.2M1320.7 477.7L1335.3 433.9M1320.7 477.7L1333.5 438.1M1320.7 477.7L1356.9 450.8M1327.4 481.1L1312.7 455.3M1327.4 481.1L1342.3 449.7M1327.4 481.1L1346.6 433.9M1327.4 481.1L1351.6 454M1327.4 481.1L1339.3 449.3M1327.4 481.1L1343.6 433.9M1327.4 481.1L1341 419.8M1327.4 481.1L1317.8 436.6M1327.4 481.1L1297.6 431.8M1327.4 481.1L1335.9 443.2M1327.4 481.1L1311.1 456.8M1327.4 481.1L1337.6 431.1M1327.4 481.1L1337.2 440.9M1327.4 481.1L1329.4 433.3M1327.4 481.1L1357.9 444M1327.4 481.1L1339.7 449M1328.3 486.2L1356.7 417.7M1328.3 486.2L1334.5 448M1328.3 486.2L1312.6 433.8M1328.3 486.2L1300 425M1328.3 486.2L1319.9 420.9M1328.3 486.2L1312.2 455.1M1328.3 486.2L1330.5 438.3M1328.3 486.2L1355.9 440.8M1328.3 486.2L1357.6 443.8M1328.3 486.2L1346.3 420M1328.3 486.2L1333.4 448.9M1328.3 486.2L1299.7 456.1M1328.3 486.2L1306.7 436.7M1328.3 486.2L1307.3 437.7M1328.3 486.2L1334.2 419.3M1328.3 486.2L1354.6 434.6M1335.1 477.7L1329.1 442.1M1335.1 477.7L1319.2 428.9M1335.1 477.7L1336.9 440.5M1335.1 477.7L1314.2 447.1M1335.1 477.7L1315 417.4M1335.1 477.7L1311.9 418.6M1335.1 477.7L1306.5 448.7M1335.1 477.7L1320.7 454.8M1335.1 477.7L1342.6 418.9M1335.1 477.7L1357.2 456.8M1335.1 477.7L1301.4 455.1M1335.1 477.7L1323.1 437M1335.1 477.7L1356.3 427.1M1335.1 477.7L1328.9 456.4M1335.1 477.7L1341 436.6M1335.1 477.7L1356.6 451.3M1335.6 489.6L1333.7 421.6M1335.6 489.6L1335 436.1M1335.6 489.6L1309.4 419M1335.6 489.6L1329.1 422M1335.6 489.6L1323.9 445M1335.6 489.6L1324.7 427.9M1335.6 489.6L1332.4 434.5M1335.6 489.6L1344.4 439.2M1335.6 489.6L1357.8 457.1M1335.6 489.6L1341.7 426.9M1335.6 489.6L1303.9 454.6M1335.6 489.6L1344.8 443.2M1335.6 489.6L1318.8 428.3M1335.6 489.6L1338.7 440.7M1335.6 489.6L1333 443.6M1335.6 489.6L1342.9 424.8M1337.6 482.8L1312.1 458.2M1337.6 482.8L1352.8 454M1337.6 482.8L1299.4 419.3M1337.6 482.8L1313.5 434.8M1337.6 482.8L1335 421.1M1337.6 482.8L1330 419.8M1337.6 482.8L1302.2 445.4M1337.6 482.8L1330.5 443.5M1337.6 482.8L1319.7 437M1337.6 482.8L1309.8 431.3M1337.6 482.8L1342.4 452.3M1337.6 482.8L1301.5 421.8M1337.6 482.8L1346.3 443.2M1337.6 482.8L1343.8 425.8M1337.6 482.8L1322.8 427.7M1337.6 482.8L1346.3 432.4M1343.5 482.8L1336.8 458.6M1343.5 482.8L1316.8 440M1343.5 482.8L1342.4 455.8M1343.5 482.8L1323 432.4M1343.5 482.8L1302.9 453.8M1343.5 482.8L1301.7 420.3M1343.5 482.8L1331.3 437.3M1343.5 482.8L1338.7 429.4M1343.5 482.8L1344.2 420M1343.5 482.8L1310 444.8M1343.5 482.8L1301.9 429.6M1343.5 482.8L1341.1 446.1M1343.5 482.8L1314.2 422.8M1343.5 482.8L1318.8 447.5M1343.5 482.8L1319.3 421.7M1343.5 482.8L1340.2 440.9M1321.5 465.9L1352.9 456.6M1321.5 465.9L1352.6 435.3M1321.5 465.9L1345.9 429.7M1321.5 465.9L1316.3 433.7M1321.5 465.9L1353.9 454.6M1321.5 465.9L1312.1 432.1M1321.5 465.9L1319.2 432.2M1321.5 465.9L1321.1 433.2M1321.5 465.9L1308.8 440.6M1321.5 465.9L1345.5 439.7M1321.5 465.9L1347.9 440.6M1321.5 465.9L1307.7 448.9M1321.5 465.9L1350.7 428.7M1321.5 465.9L1298.3 438.6M1321.5 465.9L1330.1 440.8M1321.5 465.9L1355.9 444.3M1327.4 469.3L1346 419.5M1327.4 469.3L1330.3 450.1M1327.4 469.3L1302.1 420.2M1327.4 469.3L1341.9 454.8M1327.4 469.3L1302.1 443.6M1327.4 469.3L1305.7 448.3M1327.4 469.3L1336.5 427.2M1327.4 469.3L1310.4 449.2M1327.4 469.3L1328.7 449.1M1327.4 469.3L1321 431.1M1327.4 469.3L1356 445.2M1327.4 469.3L1327 439.5M1327.4 469.3L1340.9 446.7M1327.4 469.3L1352.7 434.2M1327.4 469.3L1347.3 445M1327.4 469.3L1349 450.9M1306.3 458.3L1347.8 454.4M1306.3 458.3L1355.3 443.9M1306.3 458.3L1328.9 446.8M1306.3 458.3L1345.9 434.6M1306.3 458.3L1322.6 423M1306.3 458.3L1342.1 458.7M1306.3 458.3L1319.8 423.9M1306.3 458.3L1309.4 434.8M1306.3 458.3L1314.8 457.8M1306.3 458.3L1300.6 429.8M1306.3 458.3L1304 444.2M1306.3 458.3L1344.3 424.4M1306.3 458.3L1300.8 436.2M1306.3 458.3L1332.6 455.3M1306.3 458.3L1299.2 421.4M1306.3 458.3L1308.2 426M1313.9 458.3L1311.3 447.1M1313.9 458.3L1333.2 426.3M1313.9 458.3L1308.2 428.7M1313.9 458.3L1307.5 448.8M1313.9 458.3L1316 440M1313.9 458.3L1346.8 437.1M1313.9 458.3L1312.8 454.3M1313.9 458.3L1352.7 431.3M1313.9 458.3L1330.3 457.3M1313.9 458.3L1326.4 426.1M1313.9 458.3L1300 456.9M1313.9 458.3L1345.8 433.1M1313.9 458.3L1329.1 438.6M1313.9 458.3L1313.7 458.7M1313.9 458.3L1337 426.8M1313.9 458.3L1297.6 436.8M1296.1 453.2L1319.6 450.5M1296.1 453.2L1340.4 442.4M1296.1 453.2L1306.5 423.4M1296.1 453.2L1316.6 427.8M1296.1 453.2L1349.9 438.6M1296.1 453.2L1335.8 458.8M1296.1 453.2L1313.2 439.4M1296.1 453.2L1306.1 449.4M1296.1 453.2L1297 451.5M1296.1 453.2L1348.5 451.6M1296.1 453.2L1302 428.2M1296.1 453.2L1340.6 420.9M1296.1 453.2L1326.2 436.6M1296.1 453.2L1355.2 441.6M1296.1 453.2L1349.2 429.6M1296.1 453.2L1345.1 434.4M1294.4 447.6L1352.8 420.6M1294.4 447.6L1347.3 425.6M1294.4 447.6L1330.1 439M1294.4 447.6L1306.6 452M1294.4 447.6L1315.9 429.9M1294.4 447.6L1301.6 429.7M1294.4 447.6L1325.4 447M1294.4 447.6L1318.9 445.9M1294.4 447.6L1303.4 433.5M1294.4 447.6L1325.1 457.7M1294.4 447.6L1347.5 444.5M1294.4 447.6L1297.7 432.7M1294.4 447.6L1340.2 426.8M1294.4 447.6L1331.3 436.2M1294.4 447.6L1297.6 458.7M1294.4 447.6L1345.7 425.5M1289.3 440.1L1334.5 429.1M1289.3 440.1L1319.9 439.6M1289.3 440.1L1315.1 431.1M1289.3 440.1L1320.9 445M1289.3 440.1L1312.6 425.2M1289.3 440.1L1341.5 430.7M1289.3 440.1L1354.6 440.6M1289.3 440.1L1341.1 430.8M1289.3 440.1L1347.4 420.7M1289.3 440.1L1305.5 420.8M1289.3 440.1L1338.3 446.8M1289.3 440.1L1307.9 433.8M1289.3 440.1L1348 441.9M1289.3 440.1L1302.4 426.4M1289.3 440.1L1306.5 422M1289.3 440.1L1321.8 419.8M1292.7 426.9L1353.1 434.8M1292.7 426.9L1328.1 444.2M1292.7 426.9L1343.7 451.5M1292.7 426.9L1320.5 430.8M1292.7 426.9L1322.1 417.4M1292.7 426.9L1321.4 446.4M1292.7 426.9L1356.8 450.2M1292.7 426.9L1337.2 442.5M1292.7 426.9L1298.1 430.8M1292.7 426.9L1317.8 444.3M1292.7 426.9L1303.4 432.8M1292.7 426.9L1328 450.2M1292.7 426.9L1347.3 442.7M1292.7 426.9L1306.6 449.2M1292.7 426.9L1352 440M1292.7 426.9L1318.4 438M1291.9 432L1305.6 447M1291.9 432L1357.1 438.6M1291.9 432L1340.6 452.1M1291.9 432L1309 456.8M1291.9 432L1335.2 425.1M1291.9 432L1302 427.1M1291.9 432L1332.1 446.3M1291.9 432L1317 456.1M1291.9 432L1319 436.4M1291.9 432L1304.5 458M1291.9 432L1305.2 455M1291.9 432L1330.1 440.5M1291.9 432L1331.1 428M1291.9 432L1352.4 458.8M1291.9 432L1346.8 442.2M1291.9 432L1304.4 451.7M1299.5 489.6L1321.5 465.9M1292.7 426.9L1310.5 497.7M1288.5 483.7L1313.9 458.3M1335.6 489.6L1310.5 497.7M1294.4 447.6L1280.4 472.3M1280.4 472.3L1337.6 482.8M1335.1 477.7L1296.1 453.2M1255.5 473L1320.7 477.7M1252.9 461.6L1310 476M1280.4 472.3L1296.1 453.2M1291.9 432L1321.5 465.9M1267.8 488.7L1299.5 489.6M1313.9 458.3L1321.5 465.9M1289.3 440.1L1306.3 458.3M1291.9 432L1310 476M1337.6 482.8L1335.6 489.6M1343.5 482.8L1296.1 453.2M1313.9 458.3L1270.7 422.2M1280.4 472.3L1287.6 477.7M1318.5 482.5L1320.7 477.7M1252.9 461.6L1267.8 488.7M1328.3 486.2L1310 476M1259.4 482.5L1335.6 489.6M1310 476L1280.4 472.3M1303.4 495.5L1328.3 486.2M1267.8 488.7L1294.4 488.2M1288.5 483.7L1335.6 489.6M1291.9 432L1303.4 495.5M1252.9 461.6L1343.5 482.8M1296.1 453.2L1252.9 461.6M1306.3 458.3L1321.5 465.9M1296.1 453.2L1267.8 488.7M1310 476L1327.4 481.1M1337.6 482.8L1259.4 482.5M1327.4 481.1L1310.5 497.7M1318.5 482.5L1292.7 426.9M1337.6 482.8L1291.9 432M1327.4 469.3L1335.6 489.6M1313.9 458.3L1318.5 482.5M1313.9 458.3L1299.5 489.6M1327.4 481.1L1292.7 426.9M1320.7 477.7L1294.4 447.6M1292.7 426.9L1289.3 440.1M1327.4 469.3L1318.5 482.5M1294.4 447.6L1318.5 482.5M1259.4 482.5L1335.6 489.6M1259.4 482.5L1292.7 426.9M1328.3 486.2L1303.4 495.5M1328.3 486.2L1328.3 486.2M1318.5 482.5L1318.5 482.5M1353.5 450.1L1363.7 471M1353.3 468.9L1387.6 472.3M1326.1 462.5L1364.4 441.5M1332.6 458.4L1378.8 437.9M1344 459.5L1371.8 450.4M1330.3 446.2L1364.3 480.1M1356.4 465.8L1399.4 456.1M1349 445.5L1394.2 463.2M1353.5 439.9L1396.2 441.5M1336.8 478.9L1361.3 447.4M1325.9 450.2L1364.1 479.4M1349.5 453.6L1377 464.1M1314.3 436.8L1400.9 450.5M1335 478.1L1404.3 458.6M1321.6 448.9L1401.9 479.4M1321.1 473.7L1376.9 458.6M1320.1 475.6L1405.1 445.3M1341.1 444.2L1400 437.9M1317 468.6L1375.1 479.6M1351.9 468L1367.2 469.6M1355.1 455.7L1364.8 446.4M1326.2 467.9L1369.9 444.3M1323 465.8L1396.1 453.7M1342.5 475.8L1387.3 446.6M1326 477.8L1390.7 449M1341.4 439.5L1404.6 457M1336.3 459.7L1363.3 464.8M1325.2 446.9L1396.7 439.7M1325.2 469.9L1372.1 449.1M1337.3 443.9L1400.8 483.9M1313.7 456.5L1394.3 454.3M1354.7 458.3L1369.2 462.7M1341.7 451.8L1390.3 473.8M1335.8 458.5L1398.5 469M1336 478.9L1369 473.7M1319.7 463.2L1371.7 457M1347.5 471.4L1396.1 447M1334.6 445.5L1386.8 459.9M1313.8 462.7L1392.8 463.5M1352.1 443.6L1368 436.3M1334.9 455.3L1380.7 448.3M1348.7 438.7L1401.2 463.3M1337 471.6L1371.8 442.6M1326.4 437.3L1375.1 465.9M1336.2 447.5L1387.2 439.7M1349.7 443.2L1372.5 443.2M1343.8 473.4L1395.9 438.4M1331 452.1L1370.8 483.1M1314.1 457.8L1394.8 483.8M1318.8 456.2L1394.1 437.3M1323.2 476.1L1367.5 454.7M1325.8 454.8L1364.7 437.1M1357.7 470.3L1393.6 446.7M1323.8 460.6L1371.9 458.1M1354.8 452L1376.1 483.6M1340.1 437.2L1379 467.3M1314.9 451.1L1391.9 477.8M1339.2 475.9L1381.7 454.7M1350.7 452.8L1395.7 446M1328.1 443.8L1385.5 443.4M1321.5 445.2L1381.9 450.5M1332.6 480.8L1391.2 477.8M1321.5 452.9L1364.5 469.3M1328.8 447.9L1362.1 444.3M1324.2 453.4L1402 470.5M1324.5 451.9L1368.1 481.4M1328.6 470.4L1393.1 479.9M1313.1 450.1L1378.2 439.5M1352.5 450.3L1395.2 460.9M1314.7 453.4L1371.8 437.4M1319.1 462.6L1362.7 450.7M1331.6 460.3L1367.3 470.1M1324.1 468.6L1390.6 442.6M1321.6 448.2L1392.7 455.3M1329.9 475L1371.2 449.7M1328 445.3L1363.1 436.6M1341 461.3L1396.9 483.3M1325.8 466.1L1401.8 446M1343.7 465.9L1403.3 478M1322.9 464.3L1365.3 456.4M1330.1 438.1L1378.2 451.5M1334.9 448.2L1368.3 455.2M1333.9 443L1390.6 447.2M1316.4 451L1379.9 442.8M1338.8 467.5L1385.6 469.8M1313.2 453.3L1377.3 438.5M1330.7 437.9L1383.1 464.2M1333.6 450.3L1372.5 436.6M1328.1 476.2L1386.2 448.3M1342.7 443.9L1382 465.6M1355.8 452L1386.7 481.7M1347.5 464.1L1388.6 455.6M1331.2 448L1397.8 478.6M1329.7 477L1363 442.1M1335.4 449.5L1377.2 483.4M1319 444.2L1371.4 468.8M1322.9 435.4L1385.2 454.7M1323.1 458L1389.9 462.3M1340.7 461L1397.9 483M1327.4 451.2L1400.3 450.8M1344.9 467.2L1391.5 482.7M1349.9 442.7L1388.7 459.5M1338 452.3L1373.9 472.2M1336.6 446.2L1372.3 451.4M1320.3 458.9L1366.8 438.5M1315.3 440.1L1392.3 440.9M1332.8 470.7L1382.5 443.4M1351.8 475.2L1363.6 447.9M1335.4 471.8L1378.6 470.6M1323.7 468.1L1375.7 451.8M1346.9 473.9L1397.8 463.3M1331.4 467.7L1388.7 476.2M1348.8 441.1L1377.9 468.3M1322.8 443.8L1361.9 464.1M1355.2 479.8L1367.2 469.2M1331.4 464.3L1378.8 481.2M1357.4 437.6L1392.7 441.2M1314.1 448.5L1393.5 484.2M1317.7 450.5L1362.5 462M1334.3 452.5L1374.9 474.7M1391.4 414.2L1378.6 443.3M1381.7 414.2L1407.9 460.2M1371.7 414.2L1403.6 447.7M1389.7 414.2L1370.3 437.1M1359.2 414.2L1418.2 439.2M1376 414.2L1368.6 441.3M1355.4 414.2L1395.8 436.1M1382.1 414.2L1378 438.6M1375.8 414.2L1383.6 439.5M1356.8 414.2L1365.2 457.7M1368.1 414.2L1366.1 437.3M1375.8 414.2L1422.1 437.8M1392.7 414.2L1390.8 443.9M1390.1 414.2L1385.4 433.7M1378.8 414.2L1401.3 449.9M1366.7 414.2L1418.5 456.9M1398.3 414.2L1388.3 456M1386.4 414.2L1372 432.8M1362 414.2L1368.5 434.2M1370.3 414.2L1407.2 440.9M1377.2 414.2L1361.9 438.1M1396.8 414.2L1362 447.2M1390.2 414.2L1409.6 453.2M1372.1 414.2L1410.2 455.8M1388.3 414.2L1421.4 434.9M1396.4 414.2L1385.8 452.3M1365.6 414.2L1416.7 432.7M1379.9 414.2L1375.1 443.2M1370.8 414.2L1401.3 455.3M1370.6 414.2L1400.2 442.2M1366.8 414.2L1416.5 441.3M1358.7 414.2L1381.7 453.4M1363.8 414.2L1406.6 447.7M1384.5 414.2L1372.1 435.1M1360.8 414.2L1382.7 444.4M1354.9 414.2L1391.9 443.6M1368.7 414.2L1394 459.4M1363.5 414.2L1415 441.2M1387.7 414.2L1367.9 460.4M1373.5 414.2L1420 438.3M1372.5 414.2L1404.3 437.1M1366.6 414.2L1402.6 459.3M1368.7 414.2L1372.5 442.3M1398.1 414.2L1370.3 450.3M1371.2 414.2L1400.5 438.1M1381.7 414.2L1415.4 456.7M1382.2 414.2L1392.1 448.4M1359.5 414.2L1412.3 451.9M1374.5 414.2L1401.9 444.1M1371.5 414.2L1375.3 449.3M1379.7 414.2L1392.7 432.9M1382.1 414.2L1388.5 449.1M1380.7 414.2L1418.1 436.4M1375.2 414.2L1421.8 453.3M1368.3 414.2L1406.2 460.5M1372.2 414.2L1414.2 435.7M1398.1 414.2L1391.2 438.8M1391.5 414.2L1400.9 459M1391 414.2L1409.9 446.7M1398.3 414.2L1365.2 457.1M1385.9 414.2L1376.6 455.2M1374.5 414.2L1394 456.9M1363.2 414.2L1378.3 450.5M1357.8 414.2L1395.1 454.7M1376.1 414.2L1376 455M1392.2 414.2L1408.3 447.8M1394.4 414.2L1409.9 436.4M1370.6 414.2L1367.4 433.1M1369.7 414.2L1414 456M1359.7 414.2L1372.4 443.2M1391.9 414.2L1398.9 458M1357.7 414.2L1421.5 438M1382.2 414.2L1414.7 453M1363.2 414.2L1402 444.4M1355.2 414.2L1382 441.1M1382.2 414.2L1378.3 449.4M1385.1 414.2L1372.3 435.7M1385.1 414.2L1389.7 435.7M1359.6 414.2L1418.7 449.6M1370.3 414.2L1373.3 460.6M1385 414.2L1406.2 442.4M1368.2 414.2L1386.2 436.2M1382.3 414.2L1387.2 455.6M1372.5 414.2L1389.1 446.6M1396 414.2L1382.4 452.3M1364.9 414.2L1396.6 440.2M1392.9 414.2L1378.8 456.6M1384.3 414.2L1389 458.9M1371.6 414.2L1406.6 449.3M1374.3 414.2L1365.2 444.1" fill="none" stroke="#0d0d0d" stroke-width=".5" opacity=".62"/>
<polygon points="1294.4,414.2 1398.5,414.2 1405.3,421.9 1385,428.6 1371.5,433.7 1361.3,430.3 1354.5,435.4 1352.8,454 1344.4,465.9 1330.8,465.9 1317.3,459.1 1303.7,455.7 1295.3,448.9 1291.9,438.8 1294.4,426.9 1298.6,420.2" fill="#060606"/>
<ellipse cx="1391" cy="459.9" rx="34" ry="28.500" fill="#040404"/>
<polygon points="1344.4,426.9 1371.5,426.9 1371.5,467.6 1361.3,471.8 1347.8,466.7" fill="#060606"/>
<polygon points="1354.5,415.1 1398.5,415.1 1415.5,432 1388.4,435.4 1364.7,433.7" fill="#060606"/>
<circle cx="1310.5" cy="436.2" r="2.100" fill="#46145c"/>
<circle cx="1354.9" cy="429.7" r="2.100" fill="#46145c"/>
<circle cx="1337.8" cy="446.4" r="2.100" fill="#46145c"/>
<circle cx="1308" cy="434.9" r="2.100" fill="#46145c"/>
<circle cx="1300.6" cy="456.2" r="2.100" fill="#46145c"/>
<circle cx="1308.5" cy="435.3" r="2.100" fill="#46145c"/>
<circle cx="1314.4" cy="452.9" r="2.100" fill="#46145c"/>
<circle cx="1348" cy="442.8" r="2.100" fill="#46145c"/>
<circle cx="1327.9" cy="421.1" r="2.100" fill="#46145c"/>
<circle cx="1315.9" cy="433.3" r="2.100" fill="#46145c"/>
<circle cx="1339.6" cy="446.2" r="2.100" fill="#46145c"/>
<circle cx="1314.6" cy="456.3" r="2.100" fill="#46145c"/>
<circle cx="1333.7" cy="437.4" r="2.100" fill="#46145c"/>
<circle cx="1315.8" cy="437.2" r="2.100" fill="#46145c"/>
<circle cx="1312.7" cy="446.3" r="2.100" fill="#46145c"/>
<circle cx="1331.9" cy="459.5" r="2.100" fill="#46145c"/>
<circle cx="1318" cy="453.3" r="2.100" fill="#46145c"/>
<circle cx="1334.8" cy="447.6" r="2.100" fill="#46145c"/>
<circle cx="1322.4" cy="434.4" r="2.100" fill="#46145c"/>
<circle cx="1335.2" cy="426.4" r="2.100" fill="#46145c"/>
<circle cx="1316.3" cy="423.1" r="2.100" fill="#46145c"/>
<circle cx="1317.9" cy="449.4" r="2.100" fill="#46145c"/>
<circle cx="1297.4" cy="424.1" r="2.100" fill="#46145c"/>
<circle cx="1334.7" cy="444.2" r="2.100" fill="#46145c"/>
<circle cx="1340.9" cy="427.9" r="2.100" fill="#46145c"/>
<circle cx="1345.4" cy="448.9" r="2.100" fill="#46145c"/>
<circle cx="1343.1" cy="422" r="2.100" fill="#46145c"/>
<circle cx="1322.8" cy="417.5" r="2.100" fill="#46145c"/>
<circle cx="1315.1" cy="440.4" r="2.100" fill="#46145c"/>
<circle cx="1327.1" cy="421.7" r="2.100" fill="#46145c"/>
<circle cx="1344" cy="430" r="2.100" fill="#46145c"/>
<circle cx="1325.4" cy="422.3" r="2.100" fill="#46145c"/>
<circle cx="1329.4" cy="422.5" r="2.100" fill="#46145c"/>
<circle cx="1297.7" cy="439.3" r="2.100" fill="#46145c"/>
<circle cx="1311.3" cy="451" r="2.100" fill="#46145c"/>
<circle cx="1308.2" cy="435" r="2.100" fill="#46145c"/>
<circle cx="1295.5" cy="426.4" r="2.100" fill="#46145c"/>
<circle cx="1321.7" cy="441.3" r="2.100" fill="#46145c"/>
<circle cx="1322.2" cy="454.2" r="2.100" fill="#46145c"/>
<circle cx="1298.8" cy="454.2" r="2.100" fill="#46145c"/>
<circle cx="1326.5" cy="434.7" r="2.100" fill="#46145c"/>
<circle cx="1332.3" cy="454.8" r="2.100" fill="#46145c"/>
<circle cx="1355.5" cy="435" r="2.100" fill="#46145c"/>
<circle cx="1345.9" cy="449.1" r="2.100" fill="#46145c"/>
<circle cx="1338.9" cy="423.7" r="2.100" fill="#46145c"/>
<circle cx="1326.9" cy="418" r="2.100" fill="#46145c"/>
<circle cx="1270.7" cy="422.2" r="2.100" fill="#46145c"/>
<circle cx="1252.9" cy="461.6" r="2.100" fill="#46145c"/>
<circle cx="1255.5" cy="473" r="2.100" fill="#46145c"/>
<circle cx="1259.4" cy="482.5" r="2.100" fill="#46145c"/>
<circle cx="1267.8" cy="488.7" r="2.100" fill="#46145c"/>
<circle cx="1280.4" cy="472.3" r="2.100" fill="#46145c"/>
<circle cx="1287.6" cy="477.7" r="2.100" fill="#46145c"/>
<circle cx="1288.5" cy="483.7" r="2.100" fill="#46145c"/>
<circle cx="1294.4" cy="488.2" r="2.100" fill="#46145c"/>
<circle cx="1299.5" cy="489.6" r="2.100" fill="#46145c"/>
<circle cx="1303.4" cy="495.5" r="2.100" fill="#46145c"/>
<circle cx="1310.5" cy="497.7" r="2.100" fill="#46145c"/>
<circle cx="1310" cy="476" r="2.100" fill="#46145c"/>
<circle cx="1318.5" cy="482.5" r="2.100" fill="#46145c"/>
<circle cx="1320.7" cy="477.7" r="2.100" fill="#46145c"/>
<circle cx="1327.4" cy="481.1" r="2.100" fill="#46145c"/>
<circle cx="1328.3" cy="486.2" r="2.100" fill="#46145c"/>
<circle cx="1335.1" cy="477.7" r="2.100" fill="#46145c"/>
<circle cx="1335.6" cy="489.6" r="2.100" fill="#46145c"/>
<circle cx="1337.6" cy="482.8" r="2.100" fill="#46145c"/>
<circle cx="1343.5" cy="482.8" r="2.100" fill="#46145c"/>
<circle cx="1321.5" cy="465.9" r="2.100" fill="#46145c"/>
<circle cx="1327.4" cy="469.3" r="2.100" fill="#46145c"/>
<circle cx="1306.3" cy="458.3" r="2.100" fill="#46145c"/>
<circle cx="1313.9" cy="458.3" r="2.100" fill="#46145c"/>
<circle cx="1296.1" cy="453.2" r="2.100" fill="#46145c"/>
<circle cx="1294.4" cy="447.6" r="2.100" fill="#46145c"/>
<circle cx="1289.3" cy="440.1" r="2.100" fill="#46145c"/>
<circle cx="1292.7" cy="426.9" r="2.100" fill="#46145c"/>
<circle cx="1291.9" cy="432" r="2.100" fill="#46145c"/>
<circle cx="1362.1" cy="431.7" r="2.300" fill="#e9d634" stroke="#7d6e10" stroke-width=".5"/>
<circle cx="1369.8" cy="434.6" r="2.300" fill="#e9d634" stroke="#7d6e10" stroke-width=".5"/>
<circle cx="1358.8" cy="441.8" r="2.300" fill="#e9d634" stroke="#7d6e10" stroke-width=".5"/>
<circle cx="1367.2" cy="443.9" r="2.300" fill="#e9d634" stroke="#7d6e10" stroke-width=".5"/>
<circle cx="1366.7" cy="447.6" r="2.300" fill="#e9d634" stroke="#7d6e10" stroke-width=".5"/>
<circle cx="1357.6" cy="449.3" r="2.300" fill="#e9d634" stroke="#7d6e10" stroke-width=".5"/>
<circle cx="1360.4" cy="454.4" r="2.300" fill="#e9d634" stroke="#7d6e10" stroke-width=".5"/>
<circle cx="1355.4" cy="456.1" r="2.300" fill="#e9d634" stroke="#7d6e10" stroke-width=".5"/>
<circle cx="1373.5" cy="460.8" r="2.300" fill="#e9d634" stroke="#7d6e10" stroke-width=".5"/>
<circle cx="1365.5" cy="470.1" r="2.300" fill="#e9d634" stroke="#7d6e10" stroke-width=".5"/>
<circle cx="1389.2" cy="461.6" r="2.300" fill="#e9d634" stroke="#7d6e10" stroke-width=".5"/>
<circle cx="1396.9" cy="465" r="2.300" fill="#e9d634" stroke="#7d6e10" stroke-width=".5"/>
<circle cx="1394.3" cy="452.3" r="2.300" fill="#e9d634" stroke="#7d6e10" stroke-width=".5"/>
<circle cx="1393.5" cy="446.4" r="2.300" fill="#e9d634" stroke="#7d6e10" stroke-width=".5"/>
<circle cx="1393.5" cy="440.5" r="2.300" fill="#e9d634" stroke="#7d6e10" stroke-width=".5"/>
<circle cx="1398.5" cy="438.4" r="2.300" fill="#e9d634" stroke="#7d6e10" stroke-width=".5"/>
<circle cx="1405" cy="433.7" r="2.300" fill="#e9d634" stroke="#7d6e10" stroke-width=".5"/>
<circle cx="1412.9" cy="432.9" r="2.300" fill="#e9d634" stroke="#7d6e10" stroke-width=".5"/>
<circle cx="1420.6" cy="439.1" r="2.300" fill="#e9d634" stroke="#7d6e10" stroke-width=".5"/>
<circle cx="1412.9" cy="440.5" r="2.300" fill="#e9d634" stroke="#7d6e10" stroke-width=".5"/>
<circle cx="1408.7" cy="445.6" r="2.300" fill="#e9d634" stroke="#7d6e10" stroke-width=".5"/>
<circle cx="1418.9" cy="445.9" r="2.300" fill="#e9d634" stroke="#7d6e10" stroke-width=".5"/>
<circle cx="1427" cy="450.6" r="2.300" fill="#e9d634" stroke="#7d6e10" stroke-width=".5"/>
<circle cx="1414.6" cy="452.3" r="2.300" fill="#e9d634" stroke="#7d6e10" stroke-width=".5"/>
<circle cx="1405.3" cy="453.2" r="2.300" fill="#e9d634" stroke="#7d6e10" stroke-width=".5"/>
<circle cx="1402.8" cy="457.4" r="2.300" fill="#e9d634" stroke="#7d6e10" stroke-width=".5"/>
<circle cx="1407.9" cy="459.1" r="2.300" fill="#e9d634" stroke="#7d6e10" stroke-width=".5"/>
<circle cx="1418.9" cy="455.4" r="2.300" fill="#e9d634" stroke="#7d6e10" stroke-width=".5"/>
<circle cx="1422.3" cy="459.1" r="2.300" fill="#e9d634" stroke="#7d6e10" stroke-width=".5"/>
<circle cx="1418" cy="465" r="2.300" fill="#e9d634" stroke="#7d6e10" stroke-width=".5"/>
<circle cx="1416.3" cy="469.6" r="2.300" fill="#e9d634" stroke="#7d6e10" stroke-width=".5"/>
<circle cx="1408.7" cy="462.5" r="2.300" fill="#e9d634" stroke="#7d6e10" stroke-width=".5"/>
<circle cx="1402.8" cy="468.4" r="2.300" fill="#e9d634" stroke="#7d6e10" stroke-width=".5"/>
<circle cx="1407" cy="472.3" r="2.300" fill="#e9d634" stroke="#7d6e10" stroke-width=".5"/>
<circle cx="1412.1" cy="477.4" r="2.300" fill="#e9d634" stroke="#7d6e10" stroke-width=".5"/>
<circle cx="1418" cy="476.9" r="2.300" fill="#e9d634" stroke="#7d6e10" stroke-width=".5"/>
<circle cx="1407" cy="478.6" r="2.300" fill="#e9d634" stroke="#7d6e10" stroke-width=".5"/>
<circle cx="1400.2" cy="482" r="2.300" fill="#e9d634" stroke="#7d6e10" stroke-width=".5"/>
<circle cx="1395.2" cy="485.3" r="2.300" fill="#e9d634" stroke="#7d6e10" stroke-width=".5"/>
<circle cx="1386.7" cy="486.2" r="2.300" fill="#e9d634" stroke="#7d6e10" stroke-width=".5"/>
<circle cx="1380.8" cy="479.1" r="2.300" fill="#e9d634" stroke="#7d6e10" stroke-width=".5"/>
<circle cx="1388.4" cy="478.6" r="2.300" fill="#e9d634" stroke="#7d6e10" stroke-width=".5"/>
<circle cx="1394.3" cy="473" r="2.300" fill="#e9d634" stroke="#7d6e10" stroke-width=".5"/>
<circle cx="1384.7" cy="474.3" r="2.300" fill="#e9d634" stroke="#7d6e10" stroke-width=".5"/>
<text x="1418" y="433.7" font-size="3.800" fill="#333">w</text>
<text x="1423.9" y="439.6" font-size="3.800" fill="#333">w</text>
<text x="1425.6" y="446.4" font-size="3.800" fill="#333">w</text>
<text x="1430.7" y="451" font-size="3.800" fill="#333">w</text>
<text x="1425.3" y="459.4" font-size="3.800" fill="#333">w</text>
<text x="1422.3" y="466.7" font-size="3.800" fill="#333">w</text>
<text x="1421.9" y="477.4" font-size="3.800" fill="#333">w</text>
<text x="1410.4" y="482" font-size="3.800" fill="#333">w</text>
<text x="1399.4" y="487.5" font-size="3.800" fill="#333">w</text>
<text x="1344.4" y="483.8" font-size="3.800" fill="#333">w</text>
<text x="1337.6" y="490.6" font-size="3.800" fill="#333">w</text>
<text x="1313" y="498" font-size="3.800" fill="#333">w</text>
<text x="1271.6" y="489.2" font-size="3.800" fill="#333">w</text>
</g></g>
<rect x="1239.600" y="514.800" width="243.600" height="122.200" fill="#1b79c4"/>
<rect x="1242" y="517" width="238.8" height="117.8" fill="#fff"/>
<text x="1360.8" y="521.16" font-size="2.83" text-anchor="middle" fill="#5a5a5a">Lithography count every cluster</text>
<rect x="1252.27" y="539.18" width="4.37" height="80.43" fill="#2a6ba9"/>
<text x="1254.46" y="539.07" font-size="2.35" text-anchor="middle" fill="#5a5a5a">52</text>
<path d="M1254.46 619.61v0.75" stroke="#777" stroke-width=".35"/>
<text transform="translate(1255.31 621.17) rotate(-90)" font-size="2.35" text-anchor="end" fill="#5a5a5a">14 nm</text>
<rect x="1257.74" y="573.2" width="4.37" height="46.4" fill="#2a6ba9"/>
<text x="1259.92" y="573.1" font-size="2.35" text-anchor="middle" fill="#5a5a5a">30</text>
<path d="M1259.92 619.61v0.75" stroke="#777" stroke-width=".35"/>
<text transform="translate(1260.77 621.17) rotate(-90)" font-size="2.35" text-anchor="end" fill="#5a5a5a">32 nm</text>
<rect x="1263.2" y="534.54" width="4.37" height="85.07" fill="#2a6ba9"/>
<text x="1265.39" y="534.43" font-size="2.35" text-anchor="middle" fill="#5a5a5a">55</text>
<path d="M1265.39 619.61v0.75" stroke="#777" stroke-width=".35"/>
<text transform="translate(1266.24 621.17) rotate(-90)" font-size="2.35" text-anchor="end" fill="#5a5a5a">22 nm</text>
<rect x="1268.67" y="590.22" width="4.37" height="29.39" fill="#2a6ba9"/>
<text x="1270.85" y="590.12" font-size="2.35" text-anchor="middle" fill="#5a5a5a">19</text>
<path d="M1270.85 619.61v0.75" stroke="#777" stroke-width=".35"/>
<text transform="translate(1271.71 621.17) rotate(-90)" font-size="2.35" text-anchor="end" fill="#5a5a5a">90 nm</text>
<rect x="1274.13" y="604.14" width="4.37" height="15.47" fill="#2a6ba9"/>
<text x="1276.32" y="604.04" font-size="2.35" text-anchor="middle" fill="#5a5a5a">10</text>
<path d="M1276.32 619.61v0.75" stroke="#777" stroke-width=".35"/>
<text transform="translate(1277.17 621.17) rotate(-90)" font-size="2.35" text-anchor="end" fill="#5a5a5a">130 nm</text>
<rect x="1279.6" y="585.58" width="4.37" height="34.03" fill="#2a6ba9"/>
<text x="1281.78" y="585.48" font-size="2.35" text-anchor="middle" fill="#5a5a5a">22</text>
<path d="M1281.78 619.61v0.75" stroke="#777" stroke-width=".35"/>
<text transform="translate(1282.64 621.17) rotate(-90)" font-size="2.35" text-anchor="end" fill="#5a5a5a">65 nm</text>
<rect x="1285.06" y="613.42" width="4.37" height="6.19" fill="#2a6ba9"/>
<text x="1287.25" y="613.32" font-size="2.35" text-anchor="middle" fill="#5a5a5a">4</text>
<path d="M1287.25 619.61v0.75" stroke="#777" stroke-width=".35"/>
<text transform="translate(1288.1 621.17) rotate(-90)" font-size="2.35" text-anchor="end" fill="#5a5a5a">180 nm</text>
<rect x="1290.53" y="563.92" width="4.37" height="55.68" fill="#2a6ba9"/>
<text x="1292.72" y="563.82" font-size="2.35" text-anchor="middle" fill="#5a5a5a">36</text>
<path d="M1292.72 619.61v0.75" stroke="#777" stroke-width=".35"/>
<text transform="translate(1293.57 621.17) rotate(-90)" font-size="2.35" text-anchor="end" fill="#5a5a5a">45 nm</text>
<rect x="1296" y="616.51" width="4.37" height="3.09" fill="#2a6ba9"/>
<text x="1298.18" y="616.41" font-size="2.35" text-anchor="middle" fill="#5a5a5a">2</text>
<path d="M1298.18 619.61v0.75" stroke="#777" stroke-width=".35"/>
<text transform="translate(1299.04 621.17) rotate(-90)" font-size="2.35" text-anchor="end" fill="#5a5a5a">250 nm</text>
<rect x="1251.72" y="530.28" width="49.19" height="89.32" fill="none" stroke="#8a8a8a" stroke-width=".55"/>
<path d="M1251.72 619.61h-0.75" stroke="#777" stroke-width=".35"/>
<text x="1250.49" y="620.46" font-size="2.35" text-anchor="end" fill="#5a5a5a">0</text>
<path d="M1251.72 604.14h-0.75" stroke="#777" stroke-width=".35"/>
<text x="1250.49" y="604.99" font-size="2.35" text-anchor="end" fill="#5a5a5a">10</text>
<path d="M1251.72 588.67h-0.75" stroke="#777" stroke-width=".35"/>
<text x="1250.49" y="589.52" font-size="2.35" text-anchor="end" fill="#5a5a5a">20</text>
<path d="M1251.72 573.2h-0.75" stroke="#777" stroke-width=".35"/>
<text x="1250.49" y="574.06" font-size="2.35" text-anchor="end" fill="#5a5a5a">30</text>
<path d="M1251.72 557.74h-0.75" stroke="#777" stroke-width=".35"/>
<text x="1250.49" y="558.59" font-size="2.35" text-anchor="end" fill="#5a5a5a">40</text>
<path d="M1251.72 542.27h-0.75" stroke="#777" stroke-width=".35"/>
<text x="1250.49" y="543.12" font-size="2.35" text-anchor="end" fill="#5a5a5a">50</text>
<text x="1276.32" y="529.21" font-size="2.83" text-anchor="middle" fill="#5a5a5a">CLUSTER 1</text>
<text x="1276.32" y="632.92" font-size="2.35" text-anchor="middle" fill="#5a5a5a">Lithography</text>
<text transform="translate(1245.51 574.94) rotate(-90)" font-size="2.35" text-anchor="middle" fill="#5a5a5a">count</text>
<rect x="1311.15" y="613.64" width="4.93" height="5.97" fill="#2a6ba9"/>
<text x="1313.61" y="613.53" font-size="2.35" text-anchor="middle" fill="#5a5a5a">4</text>
<path d="M1313.61 619.61v0.75" stroke="#777" stroke-width=".35"/>
<text transform="translate(1314.47 621.17) rotate(-90)" font-size="2.35" text-anchor="end" fill="#5a5a5a">14 nm</text>
<rect x="1317.31" y="612.14" width="4.93" height="7.46" fill="#2a6ba9"/>
<text x="1319.77" y="612.04" font-size="2.35" text-anchor="middle" fill="#5a5a5a">5</text>
<path d="M1319.77 619.61v0.75" stroke="#777" stroke-width=".35"/>
<text transform="translate(1320.62 621.17) rotate(-90)" font-size="2.35" text-anchor="end" fill="#5a5a5a">130 nm</text>
<rect x="1323.47" y="534.54" width="4.93" height="85.07" fill="#2a6ba9"/>
<text x="1325.93" y="534.43" font-size="2.35" text-anchor="middle" fill="#5a5a5a">57</text>
<path d="M1325.93 619.61v0.75" stroke="#777" stroke-width=".35"/>
<text transform="translate(1326.78 621.17) rotate(-90)" font-size="2.35" text-anchor="end" fill="#5a5a5a">180 nm</text>
<rect x="1329.62" y="597.22" width="4.93" height="22.39" fill="#2a6ba9"/>
<text x="1332.09" y="597.12" font-size="2.35" text-anchor="middle" fill="#5a5a5a">15</text>
<path d="M1332.09 619.61v0.75" stroke="#777" stroke-width=".35"/>
<text transform="translate(1332.94 621.17) rotate(-90)" font-size="2.35" text-anchor="end" fill="#5a5a5a">250 nm</text>
<rect x="1335.78" y="616.62" width="4.93" height="2.98" fill="#2a6ba9"/>
<text x="1338.24" y="616.52" font-size="2.35" text-anchor="middle" fill="#5a5a5a">2</text>
<path d="M1338.24 619.61v0.75" stroke="#777" stroke-width=".35"/>
<text transform="translate(1339.1 621.17) rotate(-90)" font-size="2.35" text-anchor="end" fill="#5a5a5a">22 nm</text>
<rect x="1341.94" y="618.11" width="4.93" height="1.49" fill="#2a6ba9"/>
<text x="1344.4" y="618.01" font-size="2.35" text-anchor="middle" fill="#5a5a5a">1</text>
<path d="M1344.4 619.61v0.75" stroke="#777" stroke-width=".35"/>
<text transform="translate(1345.26 621.17) rotate(-90)" font-size="2.35" text-anchor="end" fill="#5a5a5a">32 nm</text>
<rect x="1348.1" y="613.64" width="4.93" height="5.97" fill="#2a6ba9"/>
<text x="1350.56" y="613.53" font-size="2.35" text-anchor="middle" fill="#5a5a5a">4</text>
<path d="M1350.56 619.61v0.75" stroke="#777" stroke-width=".35"/>
<text transform="translate(1351.41 621.17) rotate(-90)" font-size="2.35" text-anchor="end" fill="#5a5a5a">45 nm</text>
<rect x="1354.25" y="616.62" width="4.93" height="2.98" fill="#2a6ba9"/>
<text x="1356.72" y="616.52" font-size="2.35" text-anchor="middle" fill="#5a5a5a">2</text>
<path d="M1356.72 619.61v0.75" stroke="#777" stroke-width=".35"/>
<text transform="translate(1357.57 621.17) rotate(-90)" font-size="2.35" text-anchor="end" fill="#5a5a5a">65 nm</text>
<rect x="1310.54" y="530.28" width="49.26" height="89.32" fill="none" stroke="#8a8a8a" stroke-width=".55"/>
<path d="M1310.54 619.61h-0.75" stroke="#777" stroke-width=".35"/>
<text x="1309.31" y="620.46" font-size="2.35" text-anchor="end" fill="#5a5a5a">0</text>
<path d="M1310.54 604.68h-0.75" stroke="#777" stroke-width=".35"/>
<text x="1309.31" y="605.53" font-size="2.35" text-anchor="end" fill="#5a5a5a">10</text>
<path d="M1310.54 589.76h-0.75" stroke="#777" stroke-width=".35"/>
<text x="1309.31" y="590.61" font-size="2.35" text-anchor="end" fill="#5a5a5a">20</text>
<path d="M1310.54 574.83h-0.75" stroke="#777" stroke-width=".35"/>
<text x="1309.31" y="575.68" font-size="2.35" text-anchor="end" fill="#5a5a5a">30</text>
<path d="M1310.54 559.91h-0.75" stroke="#777" stroke-width=".35"/>
<text x="1309.31" y="560.76" font-size="2.35" text-anchor="end" fill="#5a5a5a">40</text>
<path d="M1310.54 544.98h-0.75" stroke="#777" stroke-width=".35"/>
<text x="1309.31" y="545.84" font-size="2.35" text-anchor="end" fill="#5a5a5a">50</text>
<text x="1335.17" y="529.21" font-size="2.83" text-anchor="middle" fill="#5a5a5a">CLUSTER 2</text>
<text x="1335.17" y="632.92" font-size="2.35" text-anchor="middle" fill="#5a5a5a">Lithography</text>
<text transform="translate(1304.33 574.94) rotate(-90)" font-size="2.35" text-anchor="middle" fill="#5a5a5a">count</text>
<rect x="1370.25" y="534.54" width="5.58" height="85.07" fill="#2a6ba9"/>
<path d="M1373.04 619.61v0.75" stroke="#777" stroke-width=".35"/>
<text transform="translate(1373.9 621.17) rotate(-90)" font-size="2.35" text-anchor="end" fill="#5a5a5a">130 nm</text>
<rect x="1377.23" y="617.07" width="5.58" height="2.54" fill="#2a6ba9"/>
<path d="M1380.02 619.61v0.75" stroke="#777" stroke-width=".35"/>
<text transform="translate(1380.87 621.17) rotate(-90)" font-size="2.35" text-anchor="end" fill="#5a5a5a">90 nm</text>
<rect x="1384.21" y="614.53" width="5.58" height="5.08" fill="#2a6ba9"/>
<path d="M1387 619.61v0.75" stroke="#777" stroke-width=".35"/>
<text transform="translate(1387.85 621.17) rotate(-90)" font-size="2.35" text-anchor="end" fill="#5a5a5a">14 nm</text>
<rect x="1391.19" y="611.99" width="5.58" height="7.62" fill="#2a6ba9"/>
<path d="M1393.98 619.61v0.75" stroke="#777" stroke-width=".35"/>
<text transform="translate(1394.83 621.17) rotate(-90)" font-size="2.35" text-anchor="end" fill="#5a5a5a">22 nm</text>
<rect x="1398.17" y="613.26" width="5.58" height="6.35" fill="#2a6ba9"/>
<path d="M1400.96 619.61v0.75" stroke="#777" stroke-width=".35"/>
<text transform="translate(1401.81 621.17) rotate(-90)" font-size="2.35" text-anchor="end" fill="#5a5a5a">45 nm</text>
<rect x="1405.15" y="617.07" width="5.58" height="2.54" fill="#2a6ba9"/>
<path d="M1407.94 619.61v0.75" stroke="#777" stroke-width=".35"/>
<text transform="translate(1408.79 621.17) rotate(-90)" font-size="2.35" text-anchor="end" fill="#5a5a5a">32 nm</text>
<rect x="1412.12" y="617.07" width="5.58" height="2.54" fill="#2a6ba9"/>
<path d="M1414.92 619.61v0.75" stroke="#777" stroke-width=".35"/>
<text transform="translate(1415.77 621.17) rotate(-90)" font-size="2.35" text-anchor="end" fill="#5a5a5a">65 nm</text>
<rect x="1369.55" y="530.28" width="48.85" height="89.32" fill="none" stroke="#8a8a8a" stroke-width=".55"/>
<path d="M1369.55 619.61h-0.75" stroke="#777" stroke-width=".35"/>
<text x="1368.33" y="620.46" font-size="2.35" text-anchor="end" fill="#5a5a5a">0</text>
<path d="M1369.55 606.91h-0.75" stroke="#777" stroke-width=".35"/>
<text x="1368.33" y="607.76" font-size="2.35" text-anchor="end" fill="#5a5a5a">10</text>
<path d="M1369.55 594.21h-0.75" stroke="#777" stroke-width=".35"/>
<text x="1368.33" y="595.06" font-size="2.35" text-anchor="end" fill="#5a5a5a">20</text>
<path d="M1369.55 581.51h-0.75" stroke="#777" stroke-width=".35"/>
<text x="1368.33" y="582.37" font-size="2.35" text-anchor="end" fill="#5a5a5a">30</text>
<path d="M1369.55 568.82h-0.75" stroke="#777" stroke-width=".35"/>
<text x="1368.33" y="569.67" font-size="2.35" text-anchor="end" fill="#5a5a5a">40</text>
<path d="M1369.55 556.12h-0.75" stroke="#777" stroke-width=".35"/>
<text x="1368.33" y="556.97" font-size="2.35" text-anchor="end" fill="#5a5a5a">50</text>
<path d="M1369.55 543.42h-0.75" stroke="#777" stroke-width=".35"/>
<text x="1368.33" y="544.28" font-size="2.35" text-anchor="end" fill="#5a5a5a">60</text>
<path d="M1369.55 530.73h-0.75" stroke="#777" stroke-width=".35"/>
<text x="1368.33" y="531.58" font-size="2.35" text-anchor="end" fill="#5a5a5a">70</text>
<text x="1393.98" y="529.21" font-size="2.83" text-anchor="middle" fill="#5a5a5a">CLUSTER 3</text>
<text x="1393.98" y="632.92" font-size="2.35" text-anchor="middle" fill="#5a5a5a">Lithography</text>
<text transform="translate(1363.34 574.94) rotate(-90)" font-size="2.35" text-anchor="middle" fill="#5a5a5a">count</text>
<rect x="1428.09" y="530.28" width="49.47" height="89.32" fill="none" stroke="#8a8a8a" stroke-width=".55"/>
<path d="M1428.09 619.61h-0.75" stroke="#777" stroke-width=".35"/>
<text x="1426.87" y="620.46" font-size="2.35" text-anchor="end" fill="#5a5a5a">0.0</text>
<path d="M1428.09 601.74h-0.75" stroke="#777" stroke-width=".35"/>
<text x="1426.87" y="602.59" font-size="2.35" text-anchor="end" fill="#5a5a5a">0.2</text>
<path d="M1428.09 583.88h-0.75" stroke="#777" stroke-width=".35"/>
<text x="1426.87" y="584.73" font-size="2.35" text-anchor="end" fill="#5a5a5a">0.4</text>
<path d="M1428.09 566.01h-0.75" stroke="#777" stroke-width=".35"/>
<text x="1426.87" y="566.86" font-size="2.35" text-anchor="end" fill="#5a5a5a">0.6</text>
<path d="M1428.09 548.15h-0.75" stroke="#777" stroke-width=".35"/>
<text x="1426.87" y="549" font-size="2.35" text-anchor="end" fill="#5a5a5a">0.8</text>
<path d="M1428.09 530.28h-0.75" stroke="#777" stroke-width=".35"/>
<text x="1426.87" y="531.14" font-size="2.35" text-anchor="end" fill="#5a5a5a">1.0</text>
<path d="M1428.09 619.61v0.75" stroke="#777" stroke-width=".35"/>
<text x="1428.09" y="622.81" font-size="2.35" text-anchor="middle" fill="#5a5a5a">0.0</text>
<path d="M1437.99 619.61v0.75" stroke="#777" stroke-width=".35"/>
<text x="1437.99" y="622.81" font-size="2.35" text-anchor="middle" fill="#5a5a5a">0.2</text>
<path d="M1447.88 619.61v0.75" stroke="#777" stroke-width=".35"/>
<text x="1447.88" y="622.81" font-size="2.35" text-anchor="middle" fill="#5a5a5a">0.4</text>
<path d="M1457.77 619.61v0.75" stroke="#777" stroke-width=".35"/>
<text x="1457.77" y="622.81" font-size="2.35" text-anchor="middle" fill="#5a5a5a">0.6</text>
<path d="M1467.67 619.61v0.75" stroke="#777" stroke-width=".35"/>
<text x="1467.67" y="622.81" font-size="2.35" text-anchor="middle" fill="#5a5a5a">0.8</text>
<path d="M1477.56 619.61v0.75" stroke="#777" stroke-width=".35"/>
<text x="1477.56" y="622.81" font-size="2.35" text-anchor="middle" fill="#5a5a5a">1.0</text>
<rect x="1242" y="640.800" width="238" height="135.800" fill="#fff"/>
<clipPath id="t3c"><rect x="1242" y="640.800" width="238" height="135.800"/></clipPath>
<g clip-path="url(#t3c)"><g filter="url(#bl1)">
<text x="1361" y="646.600" font-size="4.300" text-anchor="middle" fill="#666">Comunity detection</text>
<polygon points="1334.6,712.1 1391.7,712.1 1389.1,732.9 1387.4,757.1 1388.2,777.9 1287.9,777.9 1308.7,767.5 1332.9,755.4 1336.3,739.8" fill="#d2d2d2"/>
<polygon points="1332.9,755.4 1287.9,777.9 1270.6,777.9 1312.1,762.3" fill="#dcdcdc" opacity=".8"/>
<path d="M1386.5 745.4L1428.9 658.8M1388.9 757.2L1428.9 658.8M1388.1 756L1428.9 658.8M1378.3 729.1L1428.9 658.8M1390.9 739.9L1428.9 658.8M1390.3 708.4L1428.9 658.8M1384.4 716.2L1428.9 658.8M1385.4 735.5L1440.2 659.4M1378.1 714.5L1440.2 659.4M1381.7 755.6L1440.2 659.4M1388.5 711.1L1440.2 659.4M1388.9 709.9L1440.2 659.4M1386.4 709.2L1440.2 659.4M1377.9 753L1440.2 659.4M1380.8 714.4L1435 669.4M1391.5 753.1L1435 669.4M1381.9 758.3L1435 669.4M1385.3 741.6L1435 669.4M1380.7 757.1L1435 669.4M1387.4 758.6L1435 669.4M1390.2 719.3L1435 669.4M1382.9 711.5L1449.1 667.1M1379.9 705.6L1449.1 667.1M1382 737.2L1449.1 667.1M1377.9 741.6L1449.1 667.1M1382.5 720L1449.1 667.1M1389.2 730L1449.1 667.1M1382.2 730.1L1449.1 667.1M1387.6 705.1L1441.9 678.7M1391.4 703.1L1441.9 678.7M1388.2 751.4L1441.9 678.7M1378.1 748.1L1441.9 678.7M1382.9 735.8L1441.9 678.7M1378 704.5L1441.9 678.7M1380.4 757.9L1441.9 678.7M1380.6 746.2L1450.5 682.4M1390.7 757.2L1450.5 682.4M1382.6 722.6L1450.5 682.4M1385.1 747.4L1450.5 682.4M1379.4 745.8L1450.5 682.4M1388.9 752.3L1450.5 682.4M1378.4 757.4L1450.5 682.4M1379.1 721.8L1458.7 677.5M1386.3 755.7L1458.7 677.5M1382.6 756.1L1458.7 677.5M1385.4 720.1L1458.7 677.5M1382.3 712.2L1458.7 677.5M1379 710.5L1458.7 677.5M1387.4 760.4L1458.7 677.5M1380.1 704.6L1462.1 687.9M1391.5 733.1L1462.1 687.9M1383.5 715.7L1462.1 687.9M1386.1 750.3L1462.1 687.9M1384.2 726.6L1462.1 687.9M1378.6 755.6L1462.1 687.9M1378.3 730.8L1462.1 687.9M1389.5 709.4L1453.1 692.6M1388 757.6L1453.1 692.6M1386.6 748.1L1453.1 692.6M1379.3 727.3L1453.1 692.6M1379.9 751.4L1453.1 692.6M1381.9 728.4L1453.1 692.6M1391.7 751.9L1453.1 692.6M1391.4 728.4L1467 697.4M1384.6 744.7L1467 697.4M1384.5 718.9L1467 697.4M1383.5 710.4L1467 697.4M1383.1 759.9L1467 697.4M1391.2 738.6L1467 697.4M1384.8 721.7L1467 697.4M1379.1 717.8L1460.9 704.3M1388.7 752.8L1460.9 704.3M1382.9 748L1460.9 704.3M1388.6 742.6L1460.9 704.3M1387.1 746.4L1460.9 704.3M1382.9 743.2L1460.9 704.3M1381.8 730.3L1460.9 704.3" fill="none" stroke="#d6d6d6" stroke-width=".55" opacity=".9"/>
<path d="M1381.1 751.8L1349.2 777.1M1377.3 749.9L1333.5 771.6M1364.9 751.4L1358.5 775.3M1377.3 753.6L1352.1 772.9M1380.1 754.1L1352.3 775.7M1384.2 751.7L1386.9 777.3M1373.2 749L1342.1 775.6M1386.3 748.1L1371.2 774M1379.9 742.8L1376.1 772.1M1377.8 747.1L1367.4 774.8M1376.9 752.3L1334.4 766.2M1370.8 751.1L1345 773.5M1376.8 740.5L1359 767.2M1358.8 742.1L1350.5 766.5M1363.1 740.4L1358.6 769.3M1376.2 750L1346.1 776.5M1357.1 746.8L1348.3 769.7M1360.7 754.2L1353.6 764.5M1376.2 741.4L1363.1 768.7M1375.2 756.4L1378.2 769.8M1382.4 750.9L1353.3 766M1375.7 749.6L1385.9 777.4M1376.1 745.9L1382.4 764M1360.5 749.6L1366.9 766M1376.7 755.2L1353.7 770M1364.2 744.8L1386.7 769.3M1387 755.6L1365.9 767.6M1387.7 748.4L1355.9 768.4M1387.8 748.3L1348.7 770.6M1360.9 750.6L1357.4 768.1M1381.5 754.1L1333.6 771.4M1365.6 756L1376.2 767.4M1365.4 742.5L1387.6 768.1M1376 748L1368.6 772.4M1380.3 741.9L1375 768.2M1373.7 745.6L1349.3 771.4M1371.6 746.1L1374.1 772.2M1358.2 744.2L1358.1 776.7M1384.8 749.2L1333.7 774.8M1370.4 749.8L1372.1 772.8" fill="none" stroke="#e6e6e6" stroke-width=".5" opacity=".9"/>
<circle cx="1354.5" cy="684.8" r="2.300" fill="#451a52"/>
<circle cx="1365.8" cy="685.3" r="2.300" fill="#451a52"/>
<circle cx="1345" cy="687.9" r="2.300" fill="#451a52"/>
<text x="1347.6" y="689.1" font-size="3.400" fill="#777">w</text>
<circle cx="1360.6" cy="688.4" r="2.300" fill="#451a52"/>
<text x="1363.2" y="689.6" font-size="3.400" fill="#777">w</text>
<circle cx="1372.7" cy="687.9" r="2.300" fill="#451a52"/>
<circle cx="1338.1" cy="692.2" r="2.300" fill="#451a52"/>
<text x="1340.7" y="693.4" font-size="3.400" fill="#777">w</text>
<circle cx="1344.1" cy="691.7" r="2.300" fill="#451a52"/>
<text x="1346.7" y="692.9" font-size="3.400" fill="#777">w</text>
<circle cx="1350.2" cy="691" r="2.300" fill="#451a52"/>
<circle cx="1357.1" cy="693.1" r="2.300" fill="#451a52"/>
<text x="1359.7" y="694.3" font-size="3.400" fill="#777">w</text>
<circle cx="1364.9" cy="694.5" r="2.300" fill="#451a52"/>
<circle cx="1370.9" cy="693.1" r="2.300" fill="#451a52"/>
<circle cx="1380.5" cy="691.4" r="2.300" fill="#451a52"/>
<text x="1383.1" y="692.6" font-size="3.400" fill="#777">w</text>
<circle cx="1338.9" cy="699.7" r="2.300" fill="#451a52"/>
<text x="1341.5" y="700.9" font-size="3.400" fill="#777">w</text>
<circle cx="1345.9" cy="699.7" r="2.300" fill="#451a52"/>
<circle cx="1353.6" cy="699.1" r="2.300" fill="#451a52"/>
<circle cx="1360.6" cy="701.4" r="2.300" fill="#451a52"/>
<text x="1363.2" y="702.6" font-size="3.400" fill="#777">w</text>
<circle cx="1384.8" cy="700.4" r="2.300" fill="#451a52"/>
<circle cx="1332.9" cy="704.9" r="2.300" fill="#451a52"/>
<circle cx="1368.4" cy="706.6" r="2.300" fill="#451a52"/>
<circle cx="1374.4" cy="706.9" r="2.300" fill="#451a52"/>
<text x="1377" y="708.1" font-size="3.400" fill="#777">w</text>
<circle cx="1389.1" cy="708.3" r="2.300" fill="#451a52"/>
<text x="1391.7" y="709.5" font-size="3.400" fill="#777">w</text>
<circle cx="1395.2" cy="706.9" r="2.300" fill="#451a52"/>
<circle cx="1338.1" cy="710" r="2.300" fill="#451a52"/>
<circle cx="1346.7" cy="708.3" r="2.300" fill="#451a52"/>
<text x="1349.3" y="709.5" font-size="3.400" fill="#777">w</text>
<circle cx="1355.4" cy="710.4" r="2.300" fill="#451a52"/>
<text x="1358" y="711.6" font-size="3.400" fill="#777">w</text>
<circle cx="1398.6" cy="711.6" r="2.300" fill="#451a52"/>
<circle cx="1335.5" cy="713.9" r="2.300" fill="#451a52"/>
<circle cx="1341.5" cy="713" r="2.300" fill="#451a52"/>
<circle cx="1348.5" cy="715.2" r="2.300" fill="#451a52"/>
<text x="1351.1" y="716.4" font-size="3.400" fill="#777">w</text>
<circle cx="1364" cy="714.2" r="2.300" fill="#451a52"/>
<circle cx="1376.1" cy="713" r="2.300" fill="#451a52"/>
<circle cx="1383.1" cy="715.9" r="2.300" fill="#451a52"/>
<circle cx="1342.4" cy="717.7" r="2.300" fill="#451a52"/>
<circle cx="1351.9" cy="715.6" r="2.300" fill="#451a52"/>
<text x="1354.5" y="716.8" font-size="3.400" fill="#777">w</text>
<circle cx="1358" cy="719.9" r="2.300" fill="#451a52"/>
<circle cx="1369.2" cy="717.3" r="2.300" fill="#451a52"/>
<text x="1371.8" y="718.5" font-size="3.400" fill="#777">w</text>
<circle cx="1373.5" cy="717" r="2.300" fill="#451a52"/>
<circle cx="1390" cy="718.7" r="2.300" fill="#451a52"/>
<circle cx="1370.1" cy="723.9" r="2.300" fill="#451a52"/>
<circle cx="1377" cy="722.5" r="2.300" fill="#451a52"/>
<text x="1379.6" y="723.7" font-size="3.400" fill="#777">w</text>
<circle cx="1384.8" cy="721.6" r="2.300" fill="#451a52"/>
<text x="1387.4" y="722.8" font-size="3.400" fill="#777">w</text>
<circle cx="1371.8" cy="739.3" r="2.300" fill="#451a52"/>
<circle cx="1341.9" cy="747.6" r="2.300" fill="#451a52"/>
<text x="1344.5" y="748.8" font-size="3.400" fill="#777">w</text>
<circle cx="1340.7" cy="750.2" r="2.300" fill="#451a52"/>
<circle cx="1339.5" cy="756.6" r="2.300" fill="#451a52"/>
<text x="1342.1" y="757.8" font-size="3.400" fill="#777">w</text>
<circle cx="1353.6" cy="759.9" r="2.300" fill="#451a52"/>
<text x="1356.2" y="761.1" font-size="3.400" fill="#777">w</text>
<circle cx="1337.7" cy="766.1" r="2.300" fill="#451a52"/>
<circle cx="1344.1" cy="768.4" r="2.300" fill="#451a52"/>
<text x="1346.7" y="769.6" font-size="3.400" fill="#777">w</text>
<circle cx="1351.9" cy="765.4" r="2.300" fill="#451a52"/>
<text x="1354.5" y="766.6" font-size="3.400" fill="#777">w</text>
<circle cx="1312.1" cy="764" r="2.300" fill="#451a52"/>
<text x="1314.7" y="765.2" font-size="3.400" fill="#777">w</text>
<circle cx="1306.1" cy="768.4" r="2.300" fill="#451a52"/>
<text x="1308.7" y="769.6" font-size="3.400" fill="#777">w</text>
<circle cx="1308.7" cy="770.1" r="2.300" fill="#451a52"/>
<text x="1311.3" y="771.3" font-size="3.400" fill="#777">w</text>
<circle cx="1313.9" cy="769.2" r="2.300" fill="#451a52"/>
<circle cx="1296.6" cy="772.3" r="2.300" fill="#451a52"/>
<circle cx="1301.7" cy="772.3" r="2.300" fill="#451a52"/>
<circle cx="1321.6" cy="773.9" r="2.300" fill="#451a52"/>
<text x="1324.2" y="775.1" font-size="3.400" fill="#777">w</text>
<circle cx="1341.9" cy="773.5" r="2.300" fill="#451a52"/>
<text x="1344.5" y="774.7" font-size="3.400" fill="#777">w</text>
<circle cx="1351.9" cy="775.3" r="2.300" fill="#451a52"/>
<text x="1354.5" y="776.5" font-size="3.400" fill="#777">w</text>
<circle cx="1369.2" cy="773.5" r="2.300" fill="#451a52"/>
<circle cx="1381" cy="773.9" r="2.300" fill="#451a52"/>
<circle cx="1384.4" cy="773.9" r="2.300" fill="#451a52"/>
<circle cx="1387.9" cy="773.9" r="2.300" fill="#451a52"/>
<text x="1390.5" y="775.1" font-size="3.400" fill="#777">w</text>
<rect x="1427.2" y="657" width="3.400" height="3.600" fill="#f2d836"/>
<text x="1432.1" y="660.1" font-size="3.600" fill="#666">w</text>
<text x="1426.9" y="660.1" font-size="3.400" fill="#777" text-anchor="end">2</text>
<rect x="1438.5" y="657.6" width="3.400" height="3.600" fill="#f2d836"/>
<text x="1443.4" y="660.7" font-size="3.600" fill="#666">w</text>
<text x="1438.2" y="660.7" font-size="3.400" fill="#777" text-anchor="end">2</text>
<rect x="1433.3" y="667.6" width="3.400" height="3.600" fill="#f2d836"/>
<text x="1438.2" y="670.7" font-size="3.600" fill="#666">w</text>
<text x="1433" y="670.7" font-size="3.400" fill="#777" text-anchor="end">2</text>
<rect x="1447.4" y="665.3" width="3.400" height="3.600" fill="#f2d836"/>
<text x="1452.3" y="668.4" font-size="3.600" fill="#666">w</text>
<text x="1447.1" y="668.4" font-size="3.400" fill="#777" text-anchor="end">2</text>
<rect x="1440.2" y="676.9" width="3.400" height="3.600" fill="#f2d836"/>
<text x="1445.1" y="680" font-size="3.600" fill="#666">w</text>
<text x="1439.9" y="680" font-size="3.400" fill="#777" text-anchor="end">2</text>
<rect x="1448.8" y="680.6" width="3.400" height="3.600" fill="#f2d836"/>
<text x="1453.7" y="683.7" font-size="3.600" fill="#666">w</text>
<text x="1448.5" y="683.7" font-size="3.400" fill="#777" text-anchor="end">2</text>
<rect x="1457" y="675.7" width="3.400" height="3.600" fill="#f2d836"/>
<text x="1461.9" y="678.8" font-size="3.600" fill="#666">w</text>
<text x="1456.7" y="678.8" font-size="3.400" fill="#777" text-anchor="end">2</text>
<rect x="1460.4" y="686.1" width="3.400" height="3.600" fill="#f2d836"/>
<text x="1465.3" y="689.2" font-size="3.600" fill="#666">w</text>
<text x="1460.1" y="689.2" font-size="3.400" fill="#777" text-anchor="end">2</text>
<rect x="1451.4" y="690.8" width="3.400" height="3.600" fill="#f2d836"/>
<text x="1456.3" y="693.9" font-size="3.600" fill="#666">w</text>
<text x="1451.1" y="693.9" font-size="3.400" fill="#777" text-anchor="end">2</text>
<rect x="1465.3" y="695.6" width="3.400" height="3.600" fill="#f2d836"/>
<text x="1470.2" y="698.7" font-size="3.600" fill="#666">w</text>
<text x="1465" y="698.7" font-size="3.400" fill="#777" text-anchor="end">2</text>
<rect x="1459.2" y="702.5" width="3.400" height="3.600" fill="#f2d836"/>
<text x="1464.1" y="705.6" font-size="3.600" fill="#666">w</text>
<text x="1458.9" y="705.6" font-size="3.400" fill="#777" text-anchor="end">2</text>
</g></g>
<rect x="1487.500" y="426" width="7.600" height="338" rx="3.800" fill="none" stroke="#25323a" stroke-width="1"/>
<rect x="1488" y="657" width="6.600" height="63.500" rx="3.300" fill="#86929a"/>
<path d="M1487.400 423.400L1491.300 419L1495.200 423.400Z" fill="#34424a"/>
<path d="M1487.400 767.600L1491.300 772L1495.200 767.600Z" fill="#34424a"/>
<path d="M1377.500 697.500V708.600L1380 706.200L1382 710.400L1383.700 709.600L1381.800 705.600H1385.200Z" fill="#fff" stroke="#222" stroke-width=".8" stroke-linejoin="round"/>
</svg>
</div>
<!-- ===== bottom pane tabs ===== -->
<style>
.bt{position:absolute;top:1px;height:17px;background:#2c3b44;border-radius:0 0 3px 3px;font-size:10.500px;line-height:17.500px;color:#e4e8ea;white-space:nowrap;text-align:center;overflow:hidden}
.bt.sel{top:0;height:20px;background:#42525c;border-top:2px solid #1a72bb;line-height:19.500px}
#status span{position:absolute;top:2.700px;font-size:10.500px;line-height:14px;color:#e4e8ea;white-space:nowrap}
</style>
<div id="btabs" class="abs">
<div class="abs" style="left:0;top:0;width:1500px;height:1px;background:#4a5961"></div>
<div class="bt" style="left:609.500px;width:75.500px;letter-spacing:-.42px">IPython console</div>
<div class="bt" style="left:687px;width:26.400px;letter-spacing:-.3px">Files</div>
<div class="bt" style="left:715.200px;width:24.200px;letter-spacing:-.6px">Help</div>
<div class="bt" style="left:742px;width:82.800px;letter-spacing:-.15px">Variable explorer</div>
<div class="bt sel" style="left:826.400px;width:28.200px;letter-spacing:-.55px">Plots</div>
<div class="bt" style="left:856px;width:36px;letter-spacing:-.4px">History</div>
</div>

<!-- ===== status bar ===== -->
<div id="status" class="abs">
<svg class="abs" style="left:890px;top:4.500px" width="12" height="11" viewBox="0 0 12 11"><path d="M3.200 1L1 3.200L3.200 5.400M6.200 1L8.400 3.200L6.200 5.400" fill="none" stroke="#e4e8ea" stroke-width="1.200"/><path d="M4.400 7.200L6.400 9.400L10.600 4.800" fill="none" stroke="#e4e8ea" stroke-width="1.400"/></svg>
<span style="left:907.300px;letter-spacing:-.4px">LSP Python: ready</span>
<svg class="abs" style="left:1015.500px;top:4.500px" width="10" height="10" viewBox="0 0 10 10"><circle cx="5" cy="5" r="4.300" fill="none" stroke="#e4e8ea" stroke-width="1.100"/><path d="M5 5V8.600M5 5L2 3.200M5 5L8 3.200M2 3.200L5 1.600L8 3.200" fill="none" stroke="#e4e8ea" stroke-width=".9"/></svg>
<span style="left:1032px;letter-spacing:-.2px">conda: base (Python 3.8.5)</span>
<span style="left:1181.400px;letter-spacing:-.31px">Line 173, Col 34</span>
<span style="left:1281.800px;letter-spacing:-.6px">UTF-8</span>
<span style="left:1336.800px;letter-spacing:-1.100px">CRLF</span>
<span style="left:1387.400px;letter-spacing:-.8px">RW</span>
<span style="left:1434.700px;letter-spacing:-.32px">Mem 85%</span>
</div>
</body>
</html>
